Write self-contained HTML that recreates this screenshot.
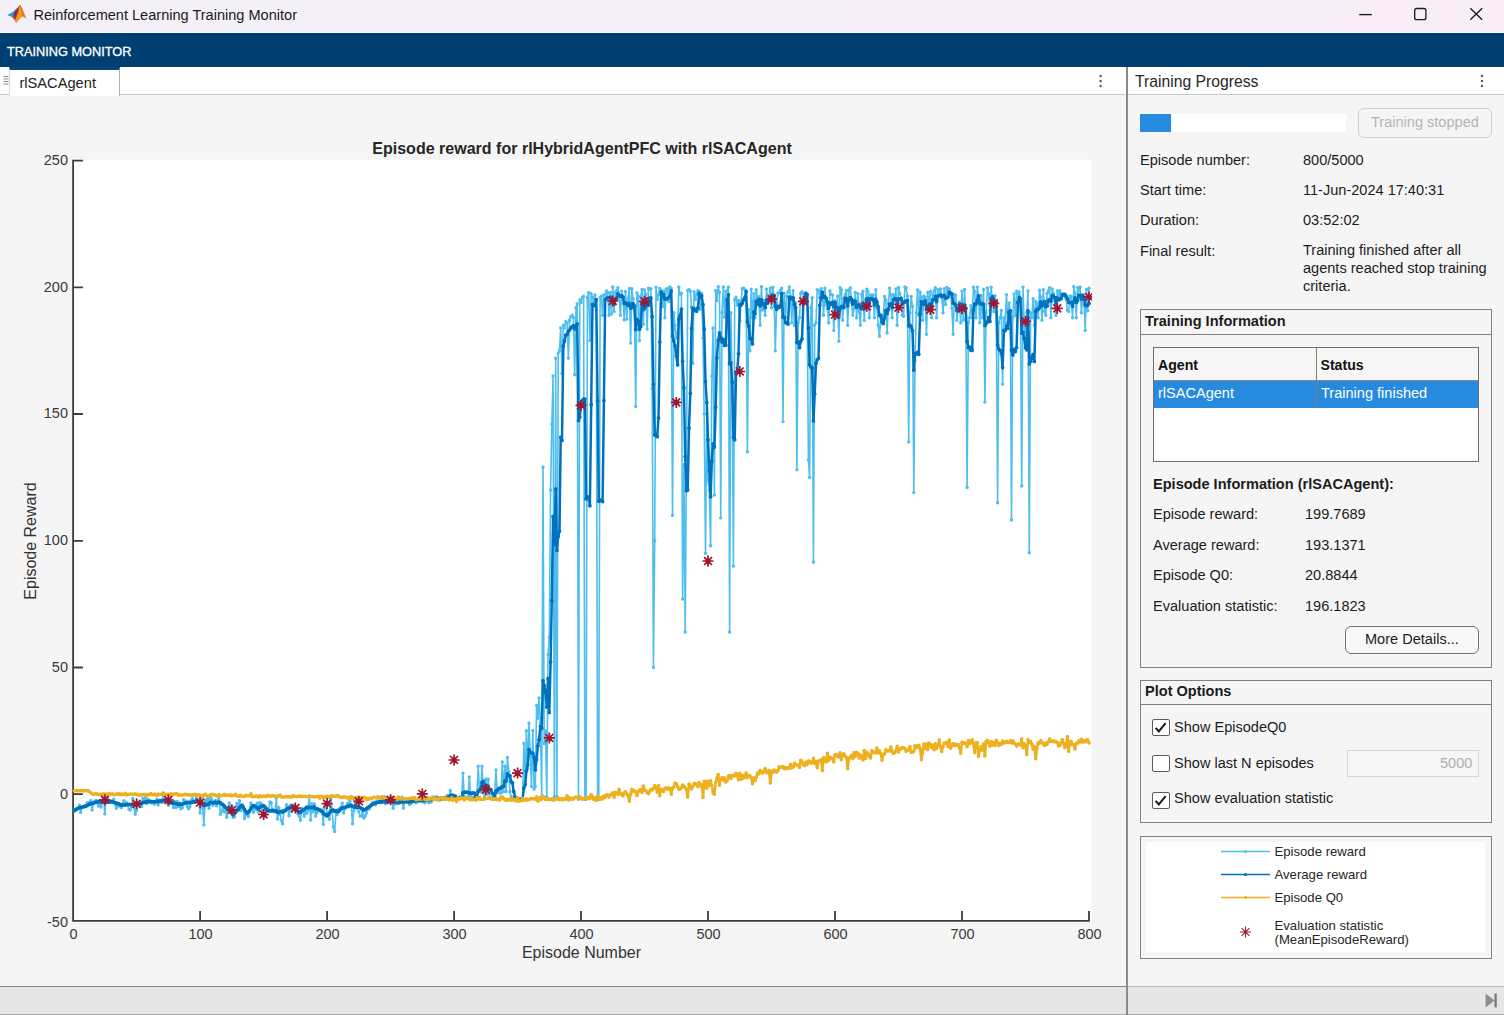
<!DOCTYPE html>
<html><head><meta charset="utf-8"><title>Reinforcement Learning Training Monitor</title>
<style>
html,body{margin:0;padding:0;}
body{width:1504px;height:1015px;position:relative;overflow:hidden;background:#f5f5f5;font-family:"Liberation Sans",sans-serif;color:#212121;}
.a{position:absolute;}
.t{position:absolute;white-space:nowrap;line-height:1;font-size:14.55px;color:#1c1c1c;}
.b{font-weight:bold;}
#titlebar{left:0;top:0;width:1504px;height:33.4px;background:linear-gradient(90deg,#f3f0f8 0%,#f5eff8 50%,#faeef7 100%);border-bottom:1.3px solid #fff;box-sizing:border-box;}
#strip{left:0;top:33.3px;width:1504px;height:33.6px;background:#003f72;}
#tabbar{left:0;top:67px;width:1504px;height:27px;background:#fff;border-bottom:1.9px solid #c9c9c9;}
#divider{left:1126px;top:67px;width:1.8px;height:948px;background:#8a8a8a;}
#status{left:0;top:986px;width:1504px;height:29px;background:#e6e6e6;border-top:1px solid #bcbcbc;border-bottom:1px solid #a8a8a8;box-sizing:border-box;}
#statusl{left:0;top:986px;width:1126px;height:1px;background:#858585;}
.panel{position:absolute;border:1.25px solid #808080;box-sizing:border-box;}
.panel .hd{position:absolute;left:0;right:0;top:0;border-bottom:1.25px solid #808080;box-sizing:border-box;}
.btn{position:absolute;box-sizing:border-box;border:1px solid #747474;border-radius:6px;background:#f8f8f8;}
.cb{position:absolute;width:17.4px;height:17px;box-sizing:border-box;border:1.2px solid #5c5c5c;border-radius:2px;background:#fff;}
</style></head><body>
<!-- window title bar -->
<div class="a" id="titlebar"></div>
<svg class="a" style="left:0;top:0" width="32" height="30" viewBox="0 0 32 30">
<path d="M7.3 15 C9.6 13.8 12 12.4 13.6 11.2 C15 9.8 16.2 8.6 17.2 7.6 L15.4 13.4 L13.2 17.7 C11.4 16.6 9.4 15.6 7.3 15 Z" fill="#3f8fd6"/>
<path d="M14.6 12.4 C16.4 10.2 18 7.4 19.4 5.2 L19.6 9 L17.4 15.4 L14.6 19.6 L13.2 17.7 Z" fill="#5a2a2a"/>
<path d="M19.4 5.2 C19.8 4.8 20.3 4.8 20.7 5.4 C22.6 8.6 24.6 14.4 26.6 18.8 C25 17.6 23.6 16.6 22.4 16.6 C20.4 17.4 18.2 20.6 16.2 22.8 C15.2 21.4 14.2 19.8 13.2 17.7 C15.6 15.6 17.8 10.4 19.4 5.2 Z" fill="#e8741e"/>
<path d="M19.4 5.2 C20.4 8 21.2 12.4 22.4 16.6 C20.4 17.4 18.2 20.6 16.2 22.8 C15.6 22 15.2 21.2 14.8 20.4 C17 17 18.6 11 19.4 5.2 Z" fill="#f29a1f"/>
<path d="M15.2 14.6 C16.4 12.8 17.8 9.6 19 6.2 L18.4 11.4 L15.8 18.6 L14.2 19.4 L13.3 17.7 Z" fill="#b5202c" opacity="0.85"/>
<path d="M20.2 7.4 L20.8 11.6 L20.2 11.8 Z" fill="#f7c21a"/>
</svg>
<div class="t" id="wtitle" style="left:33.4px;top:7.9px;font-size:14.55px;color:#1b1b1b;">Reinforcement Learning Training Monitor</div>
<svg class="a" style="left:1350px;top:0" width="154" height="33" viewBox="1350 0 154 33">
<path d="M1359.2 14.6 H1371.8" stroke="#1a1a1a" stroke-width="1.35" fill="none"/>
<rect x="1414.7" y="8.5" width="11.2" height="11.2" rx="2" stroke="#1a1a1a" stroke-width="1.3" fill="none"/>
<path d="M1470.3 8.2 L1482.2 19.8 M1482.2 8.2 L1470.3 19.8" stroke="#1a1a1a" stroke-width="1.35" fill="none"/>
</svg>
<!-- toolstrip -->
<div class="a" id="strip"></div>
<div class="t" id="tmon" style="left:7px;top:46px;font-size:12.75px;color:#fff;-webkit-text-stroke:0.3px #fff;">TRAINING MONITOR</div>
<!-- tab bar -->
<div class="a" id="tabbar"></div>
<svg class="a" style="left:2px;top:74px" width="8" height="14" viewBox="0 0 8 14"><path d="M1.5 2.5H6.5M1.5 5H6.5M1.5 7.5H6.5M1.5 10H6.5" stroke="#8c8c8c" stroke-width="1" fill="none"/></svg>
<div class="a" id="tab" style="left:9px;top:67px;width:110.8px;height:29px;background:#fff;border-top:3.6px solid #00457c;border-right:1px solid #b0b0b0;border-left:1px solid #d8d8d8;box-sizing:border-box;"></div>
<div class="t" id="tabtxt" style="left:19.4px;top:75.8px;font-size:14.67px;">rlSACAgent</div>
<svg class="a" style="left:1097px;top:73px" width="8" height="16" viewBox="0 0 8 16"><circle cx="3.6" cy="3" r="1.2" fill="#555"/><circle cx="3.6" cy="8" r="1.2" fill="#555"/><circle cx="3.6" cy="13" r="1.2" fill="#555"/></svg>
<svg class="a" style="left:1477px;top:73px" width="8" height="16" viewBox="0 0 8 16"><circle cx="5" cy="2.9" r="1.2" fill="#555"/><circle cx="5" cy="7.9" r="1.2" fill="#555"/><circle cx="5" cy="12.9" r="1.2" fill="#555"/></svg>
<div class="t" id="tprog" style="left:1135px;top:74.2px;font-size:15.72px;color:#262626;">Training Progress</div>
<div class="a" id="divider"></div>

<!-- PLOT -->
<svg class="a" style="left:0;top:96px" width="1126" height="890" viewBox="0 96 1126 890" font-family="Liberation Sans, sans-serif">
<rect x="73.6" y="159.8" width="1017.9" height="761.6" fill="#fff"/>
<path d="M73.1 159.8 V920.9 H1089.9 M73.1 920.9 h9.8 M73.1 794.2 h9.8 M73.1 667.5 h9.8 M73.1 540.8 h9.8 M73.1 414.0 h9.8 M73.1 287.3 h9.8 M73.1 160.6 h9.8 M73.1 920.9 v-10 M200.1 920.9 v-10 M327.1 920.9 v-10 M454.1 920.9 v-10 M581.0 920.9 v-10 M708.0 920.9 v-10 M835.0 920.9 v-10 M962.0 920.9 v-10 M1089.0 920.9 v-10" stroke="#3d3d3d" stroke-width="1.8" fill="none" stroke-linejoin="round"/>
<clipPath id="cp"><rect x="72.4" y="159" width="1019.6" height="763"/></clipPath>
<g clip-path="url(#cp)" fill="none" stroke-linejoin="round" stroke-linecap="round">
<polyline points="74.4,810.1 75.6,809.4 76.9,808.6 78.2,808.4 79.4,805.1 80.7,812.4 82.0,807.2 83.3,806.6 84.5,806.1 85.8,806.8 87.1,802.9 88.3,804.6 89.6,802.2 90.9,800.7 92.1,810.0 93.4,803.5 94.7,801.3 96.0,800.5 97.2,802.7 98.5,806.1 99.8,802.7 101.0,807.0 102.3,802.4 103.6,796.7 104.8,813.9 106.1,799.4 107.4,796.1 108.7,800.9 109.9,802.0 111.2,802.6 112.5,802.4 113.7,799.1 115.0,803.7 116.3,808.3 117.5,804.4 118.8,806.1 120.1,804.7 121.4,807.5 122.6,804.2 123.9,800.8 125.2,804.2 126.4,802.8 127.7,805.2 129.0,809.4 130.2,810.0 131.5,806.6 132.8,798.5 134.1,807.5 135.3,814.3 136.6,809.9 137.9,804.0 139.1,804.1 140.4,801.6 141.7,806.6 142.9,798.5 144.2,802.0 145.5,797.6 146.8,803.5 148.0,799.2 149.3,800.5 150.6,801.9 151.8,803.1 153.1,802.9 154.4,804.0 155.6,801.7 156.9,799.1 158.2,804.9 159.5,800.2 160.7,801.4 162.0,802.4 163.3,793.0 164.5,796.2 165.8,802.2 167.1,802.6 168.3,805.2 169.6,803.6 170.9,799.9 172.2,802.4 173.4,807.4 174.7,801.4 176.0,807.6 177.2,801.4 178.5,806.4 179.8,802.9 181.0,808.7 182.3,807.7 183.6,799.7 184.8,801.2 186.1,801.3 187.4,806.6 188.7,808.8 189.9,806.5 191.2,800.5 192.5,798.4 193.7,800.6 195.0,802.3 196.3,795.4 197.5,801.5 198.8,799.8 200.1,813.1 201.4,796.4 202.6,808.2 203.9,824.9 205.2,799.9 206.4,802.4 207.7,798.2 209.0,808.2 210.2,794.9 211.5,798.8 212.8,805.2 214.1,803.6 215.3,800.4 216.6,805.7 217.9,800.6 219.1,794.5 220.4,814.3 221.7,811.2 222.9,805.4 224.2,811.9 225.5,810.9 226.8,817.3 228.0,810.6 229.3,803.0 230.6,810.4 231.8,806.2 233.1,817.3 234.4,817.1 235.6,810.8 236.9,803.4 238.2,809.7 239.5,800.7 240.7,810.8 242.0,806.9 243.3,808.8 244.5,818.5 245.8,814.6 247.1,814.8 248.3,816.6 249.6,811.8 250.9,802.9 252.2,805.5 253.4,812.3 254.7,805.8 256.0,809.7 257.2,803.3 258.5,812.0 259.8,802.7 261.0,803.1 262.3,811.2 263.6,810.1 264.9,816.5 266.1,814.5 267.4,808.4 268.7,810.4 269.9,802.0 271.2,802.8 272.5,811.6 273.7,810.5 275.0,811.9 276.3,798.1 277.5,818.9 278.8,807.4 280.1,814.6 281.4,820.8 282.6,823.8 283.9,811.0 285.2,811.1 286.4,804.8 287.7,807.9 289.0,815.7 290.2,805.2 291.5,811.4 292.8,807.7 294.1,805.1 295.3,808.1 296.6,806.9 297.9,813.7 299.1,816.0 300.4,820.3 301.7,808.2 302.9,811.6 304.2,816.2 305.5,811.7 306.8,813.4 308.0,810.6 309.3,796.0 310.6,820.0 311.8,803.8 313.1,811.9 314.4,803.9 315.6,816.1 316.9,812.9 318.2,808.8 319.5,809.6 320.7,810.8 322.0,810.0 323.3,824.3 324.5,807.6 325.8,805.4 327.1,812.9 328.3,813.6 329.6,819.3 330.9,798.3 332.2,811.5 333.4,826.9 334.7,831.5 336.0,811.0 337.2,814.6 338.5,809.1 339.8,809.4 341.0,807.2 342.3,803.1 343.6,812.9 344.9,808.9 346.1,806.6 347.4,803.5 348.7,806.5 349.9,801.1 351.2,805.0 352.5,823.7 353.7,811.0 355.0,800.1 356.3,808.3 357.6,804.3 358.8,811.6 360.1,816.2 361.4,815.9 362.6,811.3 363.9,818.0 365.2,816.0 366.4,813.2 367.7,807.9 369.0,809.2 370.3,806.6 371.5,804.3 372.8,802.5 374.1,802.3 375.3,804.9 376.6,801.4 377.9,801.6 379.1,801.4 380.4,802.7 381.7,802.8 382.9,800.0 384.2,796.8 385.5,803.7 386.8,800.6 388.0,802.6 389.3,800.0 390.6,800.8 391.8,799.4 393.1,808.2 394.4,803.2 395.6,804.0 396.9,802.0 398.2,803.4 399.5,803.2 400.7,800.1 402.0,797.3 403.3,808.1 404.5,802.3 405.8,800.9 407.1,801.6 408.3,802.3 409.6,804.6 410.9,803.5 412.2,799.6 413.4,798.6 414.7,800.7 416.0,802.7 417.2,800.4 418.5,801.1 419.8,799.2 421.0,800.1 422.3,801.7 423.6,799.8 424.9,802.9 426.1,798.3 427.4,797.4 428.7,802.7 429.9,798.9 431.2,801.9 432.5,797.0 433.7,797.2 435.0,799.6 436.3,796.6 437.6,799.7 438.8,800.0 440.1,799.7 441.4,798.6 442.6,798.9 443.9,797.7 445.2,799.4 446.4,796.1 447.7,795.4 449.0,797.2 450.3,790.4 451.5,796.7 452.8,797.5 454.1,798.0 455.3,797.7 456.6,798.2 457.9,798.0 459.1,797.2 460.4,798.0 461.7,796.7 463.0,773.1 464.2,795.5 465.5,797.7 466.8,798.0 468.0,797.2 469.3,776.9 470.6,795.5 471.8,798.0 473.1,797.5 474.4,798.2 475.7,797.7 476.9,796.7 478.2,766.3 479.5,791.6 480.7,791.6 482.0,766.3 483.3,791.6 484.5,796.7 485.8,779.2 487.1,794.2 488.3,779.2 489.6,798.0 490.9,798.0 492.2,797.7 493.4,797.2 494.7,792.9 496.0,769.9 497.2,792.9 498.5,792.2 499.8,792.9 501.0,792.9 502.3,762.0 503.6,791.6 504.9,766.3 506.1,791.6 507.4,757.4 508.7,771.4 509.9,791.6 511.2,796.7 512.5,798.0 513.7,799.3 515.0,799.3 516.3,799.3 517.6,799.3 518.8,799.3 520.1,799.3 521.4,799.3 522.6,799.3 523.9,743.5 525.2,781.5 526.4,730.8 527.7,768.8 529.0,723.2 530.3,756.2 531.5,786.6 532.8,730.8 534.1,789.1 535.3,786.6 536.6,705.5 537.9,718.2 539.1,697.9 540.4,723.2 541.7,796.7 543.0,467.3 544.2,743.5 545.5,730.8 546.8,796.7 548.0,654.8 549.3,637.1 550.6,490.1 551.8,424.2 553.1,376.0 554.4,796.7 555.7,358.3 556.9,796.7 558.2,353.2 559.5,350.7 560.7,327.9 562.0,373.5 563.3,325.3 564.5,327.9 565.8,321.5 567.1,322.8 568.4,358.3 569.6,320.3 570.9,316.5 572.2,315.2 573.4,317.7 574.7,374.8 576.0,307.6 577.2,303.8 578.5,799.3 579.8,300.0 581.0,302.5 582.3,297.5 583.6,296.2 584.9,799.3 586.1,799.3 587.4,297.5 588.7,292.4 589.9,340.5 591.2,293.7 592.5,297.5 593.7,302.5 595.0,294.9 596.3,310.1 597.6,799.3 598.8,799.3 600.1,297.5 601.4,296.2 602.6,315.2 603.9,294.9 605.2,294.9 606.4,290.9 607.7,292.7 609.0,315.2 610.3,292.4 611.5,313.9 612.8,287.0 614.1,311.4 615.3,292.4 616.6,290.6 617.9,287.6 619.1,295.0 620.4,315.2 621.7,291.1 623.0,297.0 624.2,319.9 625.5,291.4 626.8,319.0 628.0,298.7 629.3,288.4 630.6,343.1 631.8,288.7 633.1,298.9 634.4,310.1 635.7,406.4 636.9,293.0 638.2,296.3 639.5,340.5 640.7,297.0 642.0,289.4 643.3,324.3 644.5,290.0 645.8,294.3 647.1,329.1 648.4,288.1 649.6,289.2 650.9,288.6 652.2,388.7 653.4,667.5 654.7,540.8 656.0,287.1 657.2,299.5 658.5,294.8 659.8,288.4 661.1,290.7 662.3,306.5 663.6,291.2 664.9,317.7 666.1,289.0 667.4,288.7 668.7,301.2 669.9,287.0 671.2,288.3 672.5,515.4 673.8,312.7 675.0,325.3 676.3,338.0 677.6,332.9 678.8,287.0 680.1,294.3 681.4,293.2 682.6,599.0 683.9,464.7 685.2,632.0 686.4,464.7 687.7,290.2 689.0,289.6 690.3,291.2 691.5,307.0 692.8,363.3 694.1,291.7 695.3,299.5 696.6,294.4 697.9,290.7 699.1,291.2 700.4,309.4 701.7,293.5 703.0,338.0 704.2,414.0 705.5,553.4 706.8,414.0 708.0,479.9 709.3,490.1 710.6,545.8 711.8,376.0 713.1,327.9 714.4,495.1 715.7,290.5 716.9,300.5 718.2,286.8 719.5,292.2 720.7,517.9 722.0,312.5 723.3,287.0 724.5,317.1 725.8,291.5 727.1,290.7 728.4,287.1 729.6,632.0 730.9,312.7 732.2,388.7 733.4,566.1 734.7,299.7 736.0,297.2 737.2,305.2 738.5,300.4 739.8,320.8 741.1,301.6 742.3,288.4 743.6,288.1 744.9,289.6 746.1,290.7 747.4,452.0 748.7,309.6 749.9,350.7 751.2,289.2 752.5,317.7 753.8,293.4 755.0,317.7 756.3,290.0 757.6,300.5 758.8,296.8 760.1,325.3 761.4,286.8 762.6,310.1 763.9,300.4 765.2,315.2 766.5,289.1 767.7,300.4 769.0,296.3 770.3,288.1 771.5,307.8 772.8,287.3 774.1,296.8 775.3,350.7 776.6,303.7 777.9,293.2 779.2,292.5 780.4,290.4 781.7,288.2 783.0,421.6 784.2,293.3 785.5,317.7 786.8,296.1 788.0,291.9 789.3,286.9 790.6,296.3 791.8,322.8 793.1,290.7 794.4,325.3 795.7,303.0 796.9,469.8 798.2,322.8 799.5,317.7 800.7,293.5 802.0,291.7 803.3,293.6 804.5,297.0 805.8,292.8 807.1,297.0 808.4,459.7 809.6,477.4 810.9,307.6 812.2,297.6 813.4,562.3 814.7,325.3 816.0,322.8 817.2,289.7 818.5,290.6 819.8,297.8 821.1,288.7 822.3,293.6 823.6,315.2 824.9,288.1 826.1,304.9 827.4,308.8 828.7,322.8 829.9,291.0 831.2,294.6 832.5,294.9 833.8,330.4 835.0,300.7 836.3,317.7 837.6,296.0 838.8,341.3 840.1,287.6 841.4,290.0 842.6,320.3 843.9,298.5 845.2,294.6 846.5,290.4 847.7,325.3 849.0,289.9 850.3,288.0 851.5,302.6 852.8,315.2 854.1,308.1 855.3,292.4 856.6,317.7 857.9,293.6 859.2,311.7 860.4,325.3 861.7,294.3 863.0,291.2 864.2,320.3 865.5,299.8 866.8,289.2 868.0,291.7 869.3,317.7 870.6,295.0 871.9,299.1 873.1,295.0 874.4,317.7 875.7,289.6 876.9,307.6 878.2,325.3 879.5,336.2 880.7,317.7 882.0,322.8 883.3,315.2 884.6,296.4 885.8,299.9 887.1,332.9 888.4,303.2 889.6,288.2 890.9,295.4 892.2,317.7 893.4,294.7 894.7,298.5 896.0,289.0 897.2,325.3 898.5,287.5 899.8,293.7 901.1,298.0 902.3,315.2 903.6,316.3 904.9,287.0 906.1,287.8 907.4,296.0 908.7,441.9 909.9,312.7 911.2,296.5 912.5,306.5 913.8,492.6 915.0,360.8 916.3,312.7 917.6,290.0 918.8,315.2 920.1,292.3 921.4,297.9 922.6,320.3 923.9,295.9 925.2,297.1 926.5,334.2 927.7,292.4 929.0,303.9 930.3,291.3 931.5,317.7 932.8,294.2 934.1,290.7 935.3,287.7 936.6,317.7 937.9,289.6 939.2,291.3 940.4,288.9 941.7,295.9 943.0,312.7 944.2,288.6 945.5,304.5 946.8,287.4 948.0,292.2 949.3,289.0 950.6,292.6 951.9,308.2 953.1,334.2 954.4,294.6 955.7,295.2 956.9,320.3 958.2,308.3 959.5,302.3 960.7,322.8 962.0,291.3 963.3,320.3 964.6,289.5 965.8,317.7 967.1,487.5 968.4,322.8 969.6,317.7 970.9,305.7 972.2,317.7 973.4,287.3 974.7,291.5 976.0,317.7 977.3,287.1 978.5,296.4 979.8,322.8 981.1,295.4 982.3,317.7 983.6,289.4 984.9,402.1 986.1,312.7 987.4,288.0 988.7,294.3 989.9,310.1 991.2,287.3 992.5,303.5 993.8,311.6 995.0,295.7 996.3,312.7 997.6,502.7 998.8,322.8 1000.1,317.7 1001.4,310.4 1002.6,384.1 1003.9,317.7 1005.2,322.8 1006.5,294.6 1007.7,322.8 1009.0,303.0 1010.3,311.6 1011.5,520.0 1012.8,317.7 1014.1,294.0 1015.3,315.2 1016.6,291.2 1017.9,293.8 1019.2,292.0 1020.4,302.0 1021.7,486.0 1023.0,287.1 1024.2,325.3 1025.5,338.0 1026.8,312.7 1028.0,291.0 1029.3,552.7 1030.6,312.7 1031.9,317.7 1033.1,298.6 1034.4,325.3 1035.7,301.5 1036.9,303.5 1038.2,317.7 1039.5,290.3 1040.7,297.0 1042.0,320.3 1043.3,289.7 1044.6,311.4 1045.8,315.2 1047.1,293.4 1048.4,290.9 1049.6,287.6 1050.9,317.7 1052.2,288.9 1053.4,293.4 1054.7,300.8 1056.0,315.2 1057.3,290.9 1058.5,299.1 1059.8,290.7 1061.1,296.3 1062.3,294.4 1063.6,294.0 1064.9,296.6 1066.1,299.0 1067.4,310.1 1068.7,311.6 1070.0,295.9 1071.2,296.4 1072.5,317.7 1073.8,286.8 1075.0,293.2 1076.3,317.7 1077.6,287.6 1078.8,290.8 1080.1,286.9 1081.4,312.7 1082.7,297.4 1083.9,298.3 1085.2,330.4 1086.5,289.5 1087.7,310.8 1089.0,288.2" stroke="#4DBEEE" stroke-width="1.6"/>
<path d="M74.4 810.1h0 M75.6 809.4h0 M76.9 808.6h0 M78.2 808.4h0 M79.4 805.1h0 M80.7 812.4h0 M82.0 807.2h0 M83.3 806.6h0 M84.5 806.1h0 M85.8 806.8h0 M87.1 802.9h0 M88.3 804.6h0 M89.6 802.2h0 M90.9 800.7h0 M92.1 810.0h0 M93.4 803.5h0 M94.7 801.3h0 M96.0 800.5h0 M97.2 802.7h0 M98.5 806.1h0 M99.8 802.7h0 M101.0 807.0h0 M102.3 802.4h0 M103.6 796.7h0 M104.8 813.9h0 M106.1 799.4h0 M107.4 796.1h0 M108.7 800.9h0 M109.9 802.0h0 M111.2 802.6h0 M112.5 802.4h0 M113.7 799.1h0 M115.0 803.7h0 M116.3 808.3h0 M117.5 804.4h0 M118.8 806.1h0 M120.1 804.7h0 M121.4 807.5h0 M122.6 804.2h0 M123.9 800.8h0 M125.2 804.2h0 M126.4 802.8h0 M127.7 805.2h0 M129.0 809.4h0 M130.2 810.0h0 M131.5 806.6h0 M132.8 798.5h0 M134.1 807.5h0 M135.3 814.3h0 M136.6 809.9h0 M137.9 804.0h0 M139.1 804.1h0 M140.4 801.6h0 M141.7 806.6h0 M142.9 798.5h0 M144.2 802.0h0 M145.5 797.6h0 M146.8 803.5h0 M148.0 799.2h0 M149.3 800.5h0 M150.6 801.9h0 M151.8 803.1h0 M153.1 802.9h0 M154.4 804.0h0 M155.6 801.7h0 M156.9 799.1h0 M158.2 804.9h0 M159.5 800.2h0 M160.7 801.4h0 M162.0 802.4h0 M163.3 793.0h0 M164.5 796.2h0 M165.8 802.2h0 M167.1 802.6h0 M168.3 805.2h0 M169.6 803.6h0 M170.9 799.9h0 M172.2 802.4h0 M173.4 807.4h0 M174.7 801.4h0 M176.0 807.6h0 M177.2 801.4h0 M178.5 806.4h0 M179.8 802.9h0 M181.0 808.7h0 M182.3 807.7h0 M183.6 799.7h0 M184.8 801.2h0 M186.1 801.3h0 M187.4 806.6h0 M188.7 808.8h0 M189.9 806.5h0 M191.2 800.5h0 M192.5 798.4h0 M193.7 800.6h0 M195.0 802.3h0 M196.3 795.4h0 M197.5 801.5h0 M198.8 799.8h0 M200.1 813.1h0 M201.4 796.4h0 M202.6 808.2h0 M203.9 824.9h0 M205.2 799.9h0 M206.4 802.4h0 M207.7 798.2h0 M209.0 808.2h0 M210.2 794.9h0 M211.5 798.8h0 M212.8 805.2h0 M214.1 803.6h0 M215.3 800.4h0 M216.6 805.7h0 M217.9 800.6h0 M219.1 794.5h0 M220.4 814.3h0 M221.7 811.2h0 M222.9 805.4h0 M224.2 811.9h0 M225.5 810.9h0 M226.8 817.3h0 M228.0 810.6h0 M229.3 803.0h0 M230.6 810.4h0 M231.8 806.2h0 M233.1 817.3h0 M234.4 817.1h0 M235.6 810.8h0 M236.9 803.4h0 M238.2 809.7h0 M239.5 800.7h0 M240.7 810.8h0 M242.0 806.9h0 M243.3 808.8h0 M244.5 818.5h0 M245.8 814.6h0 M247.1 814.8h0 M248.3 816.6h0 M249.6 811.8h0 M250.9 802.9h0 M252.2 805.5h0 M253.4 812.3h0 M254.7 805.8h0 M256.0 809.7h0 M257.2 803.3h0 M258.5 812.0h0 M259.8 802.7h0 M261.0 803.1h0 M262.3 811.2h0 M263.6 810.1h0 M264.9 816.5h0 M266.1 814.5h0 M267.4 808.4h0 M268.7 810.4h0 M269.9 802.0h0 M271.2 802.8h0 M272.5 811.6h0 M273.7 810.5h0 M275.0 811.9h0 M276.3 798.1h0 M277.5 818.9h0 M278.8 807.4h0 M280.1 814.6h0 M281.4 820.8h0 M282.6 823.8h0 M283.9 811.0h0 M285.2 811.1h0 M286.4 804.8h0 M287.7 807.9h0 M289.0 815.7h0 M290.2 805.2h0 M291.5 811.4h0 M292.8 807.7h0 M294.1 805.1h0 M295.3 808.1h0 M296.6 806.9h0 M297.9 813.7h0 M299.1 816.0h0 M300.4 820.3h0 M301.7 808.2h0 M302.9 811.6h0 M304.2 816.2h0 M305.5 811.7h0 M306.8 813.4h0 M308.0 810.6h0 M309.3 796.0h0 M310.6 820.0h0 M311.8 803.8h0 M313.1 811.9h0 M314.4 803.9h0 M315.6 816.1h0 M316.9 812.9h0 M318.2 808.8h0 M319.5 809.6h0 M320.7 810.8h0 M322.0 810.0h0 M323.3 824.3h0 M324.5 807.6h0 M325.8 805.4h0 M327.1 812.9h0 M328.3 813.6h0 M329.6 819.3h0 M330.9 798.3h0 M332.2 811.5h0 M333.4 826.9h0 M334.7 831.5h0 M336.0 811.0h0 M337.2 814.6h0 M338.5 809.1h0 M339.8 809.4h0 M341.0 807.2h0 M342.3 803.1h0 M343.6 812.9h0 M344.9 808.9h0 M346.1 806.6h0 M347.4 803.5h0 M348.7 806.5h0 M349.9 801.1h0 M351.2 805.0h0 M352.5 823.7h0 M353.7 811.0h0 M355.0 800.1h0 M356.3 808.3h0 M357.6 804.3h0 M358.8 811.6h0 M360.1 816.2h0 M361.4 815.9h0 M362.6 811.3h0 M363.9 818.0h0 M365.2 816.0h0 M366.4 813.2h0 M367.7 807.9h0 M369.0 809.2h0 M370.3 806.6h0 M371.5 804.3h0 M372.8 802.5h0 M374.1 802.3h0 M375.3 804.9h0 M376.6 801.4h0 M377.9 801.6h0 M379.1 801.4h0 M380.4 802.7h0 M381.7 802.8h0 M382.9 800.0h0 M384.2 796.8h0 M385.5 803.7h0 M386.8 800.6h0 M388.0 802.6h0 M389.3 800.0h0 M390.6 800.8h0 M391.8 799.4h0 M393.1 808.2h0 M394.4 803.2h0 M395.6 804.0h0 M396.9 802.0h0 M398.2 803.4h0 M399.5 803.2h0 M400.7 800.1h0 M402.0 797.3h0 M403.3 808.1h0 M404.5 802.3h0 M405.8 800.9h0 M407.1 801.6h0 M408.3 802.3h0 M409.6 804.6h0 M410.9 803.5h0 M412.2 799.6h0 M413.4 798.6h0 M414.7 800.7h0 M416.0 802.7h0 M417.2 800.4h0 M418.5 801.1h0 M419.8 799.2h0 M421.0 800.1h0 M422.3 801.7h0 M423.6 799.8h0 M424.9 802.9h0 M426.1 798.3h0 M427.4 797.4h0 M428.7 802.7h0 M429.9 798.9h0 M431.2 801.9h0 M432.5 797.0h0 M433.7 797.2h0 M435.0 799.6h0 M436.3 796.6h0 M437.6 799.7h0 M438.8 800.0h0 M440.1 799.7h0 M441.4 798.6h0 M442.6 798.9h0 M443.9 797.7h0 M445.2 799.4h0 M446.4 796.1h0 M447.7 795.4h0 M449.0 797.2h0 M450.3 790.4h0 M451.5 796.7h0 M452.8 797.5h0 M454.1 798.0h0 M455.3 797.7h0 M456.6 798.2h0 M457.9 798.0h0 M459.1 797.2h0 M460.4 798.0h0 M461.7 796.7h0 M463.0 773.1h0 M464.2 795.5h0 M465.5 797.7h0 M466.8 798.0h0 M468.0 797.2h0 M469.3 776.9h0 M470.6 795.5h0 M471.8 798.0h0 M473.1 797.5h0 M474.4 798.2h0 M475.7 797.7h0 M476.9 796.7h0 M478.2 766.3h0 M479.5 791.6h0 M480.7 791.6h0 M482.0 766.3h0 M483.3 791.6h0 M484.5 796.7h0 M485.8 779.2h0 M487.1 794.2h0 M488.3 779.2h0 M489.6 798.0h0 M490.9 798.0h0 M492.2 797.7h0 M493.4 797.2h0 M494.7 792.9h0 M496.0 769.9h0 M497.2 792.9h0 M498.5 792.2h0 M499.8 792.9h0 M501.0 792.9h0 M502.3 762.0h0 M503.6 791.6h0 M504.9 766.3h0 M506.1 791.6h0 M507.4 757.4h0 M508.7 771.4h0 M509.9 791.6h0 M511.2 796.7h0 M512.5 798.0h0 M513.7 799.3h0 M515.0 799.3h0 M516.3 799.3h0 M517.6 799.3h0 M518.8 799.3h0 M520.1 799.3h0 M521.4 799.3h0 M522.6 799.3h0 M523.9 743.5h0 M525.2 781.5h0 M526.4 730.8h0 M527.7 768.8h0 M529.0 723.2h0 M530.3 756.2h0 M531.5 786.6h0 M532.8 730.8h0 M534.1 789.1h0 M535.3 786.6h0 M536.6 705.5h0 M537.9 718.2h0 M539.1 697.9h0 M540.4 723.2h0 M541.7 796.7h0 M543.0 467.3h0 M544.2 743.5h0 M545.5 730.8h0 M546.8 796.7h0 M548.0 654.8h0 M549.3 637.1h0 M550.6 490.1h0 M551.8 424.2h0 M553.1 376.0h0 M554.4 796.7h0 M555.7 358.3h0 M556.9 796.7h0 M558.2 353.2h0 M559.5 350.7h0 M560.7 327.9h0 M562.0 373.5h0 M563.3 325.3h0 M564.5 327.9h0 M565.8 321.5h0 M567.1 322.8h0 M568.4 358.3h0 M569.6 320.3h0 M570.9 316.5h0 M572.2 315.2h0 M573.4 317.7h0 M574.7 374.8h0 M576.0 307.6h0 M577.2 303.8h0 M578.5 799.3h0 M579.8 300.0h0 M581.0 302.5h0 M582.3 297.5h0 M583.6 296.2h0 M584.9 799.3h0 M586.1 799.3h0 M587.4 297.5h0 M588.7 292.4h0 M589.9 340.5h0 M591.2 293.7h0 M592.5 297.5h0 M593.7 302.5h0 M595.0 294.9h0 M596.3 310.1h0 M597.6 799.3h0 M598.8 799.3h0 M600.1 297.5h0 M601.4 296.2h0 M602.6 315.2h0 M603.9 294.9h0 M605.2 294.9h0 M606.4 290.9h0 M607.7 292.7h0 M609.0 315.2h0 M610.3 292.4h0 M611.5 313.9h0 M612.8 287.0h0 M614.1 311.4h0 M615.3 292.4h0 M616.6 290.6h0 M617.9 287.6h0 M619.1 295.0h0 M620.4 315.2h0 M621.7 291.1h0 M623.0 297.0h0 M624.2 319.9h0 M625.5 291.4h0 M626.8 319.0h0 M628.0 298.7h0 M629.3 288.4h0 M630.6 343.1h0 M631.8 288.7h0 M633.1 298.9h0 M634.4 310.1h0 M635.7 406.4h0 M636.9 293.0h0 M638.2 296.3h0 M639.5 340.5h0 M640.7 297.0h0 M642.0 289.4h0 M643.3 324.3h0 M644.5 290.0h0 M645.8 294.3h0 M647.1 329.1h0 M648.4 288.1h0 M649.6 289.2h0 M650.9 288.6h0 M652.2 388.7h0 M653.4 667.5h0 M654.7 540.8h0 M656.0 287.1h0 M657.2 299.5h0 M658.5 294.8h0 M659.8 288.4h0 M661.1 290.7h0 M662.3 306.5h0 M663.6 291.2h0 M664.9 317.7h0 M666.1 289.0h0 M667.4 288.7h0 M668.7 301.2h0 M669.9 287.0h0 M671.2 288.3h0 M672.5 515.4h0 M673.8 312.7h0 M675.0 325.3h0 M676.3 338.0h0 M677.6 332.9h0 M678.8 287.0h0 M680.1 294.3h0 M681.4 293.2h0 M682.6 599.0h0 M683.9 464.7h0 M685.2 632.0h0 M686.4 464.7h0 M687.7 290.2h0 M689.0 289.6h0 M690.3 291.2h0 M691.5 307.0h0 M692.8 363.3h0 M694.1 291.7h0 M695.3 299.5h0 M696.6 294.4h0 M697.9 290.7h0 M699.1 291.2h0 M700.4 309.4h0 M701.7 293.5h0 M703.0 338.0h0 M704.2 414.0h0 M705.5 553.4h0 M706.8 414.0h0 M708.0 479.9h0 M709.3 490.1h0 M710.6 545.8h0 M711.8 376.0h0 M713.1 327.9h0 M714.4 495.1h0 M715.7 290.5h0 M716.9 300.5h0 M718.2 286.8h0 M719.5 292.2h0 M720.7 517.9h0 M722.0 312.5h0 M723.3 287.0h0 M724.5 317.1h0 M725.8 291.5h0 M727.1 290.7h0 M728.4 287.1h0 M729.6 632.0h0 M730.9 312.7h0 M732.2 388.7h0 M733.4 566.1h0 M734.7 299.7h0 M736.0 297.2h0 M737.2 305.2h0 M738.5 300.4h0 M739.8 320.8h0 M741.1 301.6h0 M742.3 288.4h0 M743.6 288.1h0 M744.9 289.6h0 M746.1 290.7h0 M747.4 452.0h0 M748.7 309.6h0 M749.9 350.7h0 M751.2 289.2h0 M752.5 317.7h0 M753.8 293.4h0 M755.0 317.7h0 M756.3 290.0h0 M757.6 300.5h0 M758.8 296.8h0 M760.1 325.3h0 M761.4 286.8h0 M762.6 310.1h0 M763.9 300.4h0 M765.2 315.2h0 M766.5 289.1h0 M767.7 300.4h0 M769.0 296.3h0 M770.3 288.1h0 M771.5 307.8h0 M772.8 287.3h0 M774.1 296.8h0 M775.3 350.7h0 M776.6 303.7h0 M777.9 293.2h0 M779.2 292.5h0 M780.4 290.4h0 M781.7 288.2h0 M783.0 421.6h0 M784.2 293.3h0 M785.5 317.7h0 M786.8 296.1h0 M788.0 291.9h0 M789.3 286.9h0 M790.6 296.3h0 M791.8 322.8h0 M793.1 290.7h0 M794.4 325.3h0 M795.7 303.0h0 M796.9 469.8h0 M798.2 322.8h0 M799.5 317.7h0 M800.7 293.5h0 M802.0 291.7h0 M803.3 293.6h0 M804.5 297.0h0 M805.8 292.8h0 M807.1 297.0h0 M808.4 459.7h0 M809.6 477.4h0 M810.9 307.6h0 M812.2 297.6h0 M813.4 562.3h0 M814.7 325.3h0 M816.0 322.8h0 M817.2 289.7h0 M818.5 290.6h0 M819.8 297.8h0 M821.1 288.7h0 M822.3 293.6h0 M823.6 315.2h0 M824.9 288.1h0 M826.1 304.9h0 M827.4 308.8h0 M828.7 322.8h0 M829.9 291.0h0 M831.2 294.6h0 M832.5 294.9h0 M833.8 330.4h0 M835.0 300.7h0 M836.3 317.7h0 M837.6 296.0h0 M838.8 341.3h0 M840.1 287.6h0 M841.4 290.0h0 M842.6 320.3h0 M843.9 298.5h0 M845.2 294.6h0 M846.5 290.4h0 M847.7 325.3h0 M849.0 289.9h0 M850.3 288.0h0 M851.5 302.6h0 M852.8 315.2h0 M854.1 308.1h0 M855.3 292.4h0 M856.6 317.7h0 M857.9 293.6h0 M859.2 311.7h0 M860.4 325.3h0 M861.7 294.3h0 M863.0 291.2h0 M864.2 320.3h0 M865.5 299.8h0 M866.8 289.2h0 M868.0 291.7h0 M869.3 317.7h0 M870.6 295.0h0 M871.9 299.1h0 M873.1 295.0h0 M874.4 317.7h0 M875.7 289.6h0 M876.9 307.6h0 M878.2 325.3h0 M879.5 336.2h0 M880.7 317.7h0 M882.0 322.8h0 M883.3 315.2h0 M884.6 296.4h0 M885.8 299.9h0 M887.1 332.9h0 M888.4 303.2h0 M889.6 288.2h0 M890.9 295.4h0 M892.2 317.7h0 M893.4 294.7h0 M894.7 298.5h0 M896.0 289.0h0 M897.2 325.3h0 M898.5 287.5h0 M899.8 293.7h0 M901.1 298.0h0 M902.3 315.2h0 M903.6 316.3h0 M904.9 287.0h0 M906.1 287.8h0 M907.4 296.0h0 M908.7 441.9h0 M909.9 312.7h0 M911.2 296.5h0 M912.5 306.5h0 M913.8 492.6h0 M915.0 360.8h0 M916.3 312.7h0 M917.6 290.0h0 M918.8 315.2h0 M920.1 292.3h0 M921.4 297.9h0 M922.6 320.3h0 M923.9 295.9h0 M925.2 297.1h0 M926.5 334.2h0 M927.7 292.4h0 M929.0 303.9h0 M930.3 291.3h0 M931.5 317.7h0 M932.8 294.2h0 M934.1 290.7h0 M935.3 287.7h0 M936.6 317.7h0 M937.9 289.6h0 M939.2 291.3h0 M940.4 288.9h0 M941.7 295.9h0 M943.0 312.7h0 M944.2 288.6h0 M945.5 304.5h0 M946.8 287.4h0 M948.0 292.2h0 M949.3 289.0h0 M950.6 292.6h0 M951.9 308.2h0 M953.1 334.2h0 M954.4 294.6h0 M955.7 295.2h0 M956.9 320.3h0 M958.2 308.3h0 M959.5 302.3h0 M960.7 322.8h0 M962.0 291.3h0 M963.3 320.3h0 M964.6 289.5h0 M965.8 317.7h0 M967.1 487.5h0 M968.4 322.8h0 M969.6 317.7h0 M970.9 305.7h0 M972.2 317.7h0 M973.4 287.3h0 M974.7 291.5h0 M976.0 317.7h0 M977.3 287.1h0 M978.5 296.4h0 M979.8 322.8h0 M981.1 295.4h0 M982.3 317.7h0 M983.6 289.4h0 M984.9 402.1h0 M986.1 312.7h0 M987.4 288.0h0 M988.7 294.3h0 M989.9 310.1h0 M991.2 287.3h0 M992.5 303.5h0 M993.8 311.6h0 M995.0 295.7h0 M996.3 312.7h0 M997.6 502.7h0 M998.8 322.8h0 M1000.1 317.7h0 M1001.4 310.4h0 M1002.6 384.1h0 M1003.9 317.7h0 M1005.2 322.8h0 M1006.5 294.6h0 M1007.7 322.8h0 M1009.0 303.0h0 M1010.3 311.6h0 M1011.5 520.0h0 M1012.8 317.7h0 M1014.1 294.0h0 M1015.3 315.2h0 M1016.6 291.2h0 M1017.9 293.8h0 M1019.2 292.0h0 M1020.4 302.0h0 M1021.7 486.0h0 M1023.0 287.1h0 M1024.2 325.3h0 M1025.5 338.0h0 M1026.8 312.7h0 M1028.0 291.0h0 M1029.3 552.7h0 M1030.6 312.7h0 M1031.9 317.7h0 M1033.1 298.6h0 M1034.4 325.3h0 M1035.7 301.5h0 M1036.9 303.5h0 M1038.2 317.7h0 M1039.5 290.3h0 M1040.7 297.0h0 M1042.0 320.3h0 M1043.3 289.7h0 M1044.6 311.4h0 M1045.8 315.2h0 M1047.1 293.4h0 M1048.4 290.9h0 M1049.6 287.6h0 M1050.9 317.7h0 M1052.2 288.9h0 M1053.4 293.4h0 M1054.7 300.8h0 M1056.0 315.2h0 M1057.3 290.9h0 M1058.5 299.1h0 M1059.8 290.7h0 M1061.1 296.3h0 M1062.3 294.4h0 M1063.6 294.0h0 M1064.9 296.6h0 M1066.1 299.0h0 M1067.4 310.1h0 M1068.7 311.6h0 M1070.0 295.9h0 M1071.2 296.4h0 M1072.5 317.7h0 M1073.8 286.8h0 M1075.0 293.2h0 M1076.3 317.7h0 M1077.6 287.6h0 M1078.8 290.8h0 M1080.1 286.9h0 M1081.4 312.7h0 M1082.7 297.4h0 M1083.9 298.3h0 M1085.2 330.4h0 M1086.5 289.5h0 M1087.7 310.8h0 M1089.0 288.2h0" stroke="#4DBEEE" stroke-width="3.4"/>
<polyline points="74.4,810.7 75.6,809.8 76.9,809.0 78.2,808.2 79.4,807.7 80.7,807.6 82.0,807.2 83.3,806.8 84.5,806.4 85.8,806.2 87.1,805.3 88.3,804.8 89.6,804.2 90.9,803.6 92.1,803.4 93.4,803.1 94.7,802.6 96.0,802.2 97.2,802.0 98.5,801.4 99.8,801.1 101.0,801.6 102.3,801.9 103.6,801.7 104.8,802.3 106.1,802.2 107.4,801.6 108.7,801.6 109.9,802.0 111.2,801.4 112.5,801.8 113.7,802.2 115.0,802.6 116.3,803.2 117.5,803.5 118.8,804.0 120.1,804.5 121.4,805.0 122.6,804.9 123.9,804.9 125.2,805.0 126.4,804.6 127.7,804.3 129.0,804.4 130.2,804.7 131.5,804.7 132.8,804.3 134.1,804.3 135.3,804.5 136.6,804.3 137.9,804.0 139.1,804.2 140.4,803.8 141.7,803.3 142.9,802.6 144.2,802.4 145.5,802.0 146.8,802.0 148.0,801.5 149.3,801.6 150.6,801.5 151.8,801.8 153.1,801.6 154.4,801.8 155.6,801.8 156.9,801.5 158.2,801.5 159.5,801.2 160.7,800.9 162.0,800.9 163.3,800.4 164.5,800.2 165.8,800.5 167.1,800.9 168.3,801.2 169.6,802.1 170.9,802.5 172.2,802.7 173.4,803.2 174.7,803.1 176.0,803.6 177.2,803.8 178.5,804.3 179.8,804.2 181.0,804.3 182.3,804.1 183.6,803.7 184.8,803.2 186.1,802.9 187.4,802.6 188.7,802.5 189.9,802.7 191.2,802.5 192.5,802.2 193.7,801.6 195.0,801.6 196.3,801.2 197.5,801.5 198.8,801.8 200.1,802.8 201.4,802.6 202.6,803.6 203.9,805.2 205.2,805.4 206.4,804.6 207.7,804.5 209.0,804.4 210.2,802.5 211.5,802.4 212.8,802.5 214.1,802.7 215.3,802.2 216.6,802.8 217.9,802.8 219.1,802.1 220.4,802.7 221.7,804.0 222.9,804.6 224.2,805.9 225.5,807.4 226.8,808.1 228.0,808.6 229.3,810.2 230.6,811.9 231.8,813.2 233.1,814.8 234.4,813.4 235.6,812.3 236.9,810.5 238.2,809.6 239.5,807.7 240.7,806.3 242.0,805.2 243.3,807.2 244.5,809.3 245.8,811.6 247.1,813.1 248.3,812.0 249.6,810.7 250.9,808.5 252.2,806.8 253.4,805.7 254.7,806.1 256.0,807.0 257.2,807.8 258.5,808.9 259.8,807.5 261.0,806.5 262.3,805.8 263.6,805.6 264.9,807.0 266.1,808.8 267.4,810.0 268.7,810.8 269.9,811.0 271.2,810.3 272.5,810.3 273.7,810.6 275.0,811.0 276.3,811.0 277.5,812.3 278.8,812.3 280.1,811.6 281.4,811.3 282.6,812.0 283.9,810.9 285.2,810.5 286.4,809.3 287.7,808.4 289.0,807.8 290.2,807.3 291.5,807.2 292.8,807.1 294.1,808.2 295.3,808.9 296.6,810.0 297.9,811.1 299.1,812.4 300.4,812.0 301.7,810.8 302.9,810.1 304.2,809.3 305.5,808.3 306.8,807.1 308.0,807.7 309.3,807.1 310.6,807.6 311.8,807.3 313.1,807.3 314.4,807.0 315.6,808.8 316.9,808.8 318.2,809.6 319.5,809.9 320.7,810.8 322.0,811.5 323.3,813.3 324.5,814.2 325.8,814.9 327.1,815.9 328.3,814.6 329.6,812.8 330.9,811.0 332.2,810.2 333.4,810.1 334.7,811.3 336.0,810.8 337.2,811.7 338.5,811.5 339.8,810.3 341.0,808.6 342.3,808.0 343.6,807.6 344.9,807.3 346.1,806.9 347.4,806.5 348.7,806.4 349.9,805.5 351.2,805.3 352.5,806.4 353.7,806.9 355.0,806.5 356.3,807.0 357.6,807.3 358.8,806.8 360.1,807.4 361.4,808.6 362.6,809.0 363.9,810.1 365.2,809.6 366.4,808.7 367.7,807.6 369.0,807.0 370.3,805.8 371.5,804.9 372.8,804.1 374.1,803.6 375.3,803.2 376.6,802.6 377.9,802.3 379.1,802.0 380.4,801.8 381.7,801.7 382.9,801.7 384.2,801.5 385.5,801.6 386.8,801.5 388.0,801.5 389.3,801.5 390.6,801.7 391.8,801.5 393.1,801.9 394.4,801.9 395.6,802.2 396.9,802.2 398.2,802.5 399.5,802.1 400.7,801.9 402.0,801.5 403.3,801.9 404.5,801.8 405.8,801.6 407.1,801.7 408.3,802.0 409.6,801.8 410.9,801.7 412.2,801.5 413.4,801.2 414.7,801.0 416.0,800.8 417.2,800.5 418.5,800.5 419.8,800.5 421.0,800.4 422.3,800.3 423.6,800.3 424.9,800.3 426.1,800.2 427.4,800.0 428.7,800.0 429.9,799.8 431.2,799.6 432.5,799.4 433.7,799.2 435.0,798.9 436.3,798.6 437.6,798.4 438.8,798.4 440.1,798.5 441.4,798.4 442.6,798.5 443.9,798.3 445.2,798.2 446.4,798.1 447.7,797.5 449.0,797.2 450.3,795.7 451.5,795.2 452.8,795.4 454.1,796.0 455.3,796.1 456.6,797.6 457.9,797.9 459.1,797.8 460.4,797.8 461.7,797.6 463.0,792.6 464.2,792.1 465.5,792.2 466.8,792.2 468.0,792.3 469.3,793.1 470.6,793.1 471.8,793.1 473.1,793.0 474.4,793.2 475.7,797.4 476.9,797.6 478.2,791.3 479.5,790.1 480.7,788.8 482.0,782.5 483.3,781.5 484.5,787.6 485.8,785.1 487.1,785.6 488.3,788.2 489.6,789.5 490.9,789.7 492.2,793.4 493.4,794.0 494.7,796.8 496.0,791.1 497.2,790.1 498.5,789.0 499.8,788.2 501.0,788.2 502.3,786.6 503.6,786.3 504.9,781.2 506.1,780.9 507.4,773.8 508.7,775.7 509.9,775.7 511.2,781.8 512.5,783.0 513.7,791.4 515.0,797.0 516.3,798.5 517.6,799.0 518.8,799.3 520.1,799.3 521.4,799.3 522.6,799.3 523.9,788.1 525.2,784.6 526.4,770.9 527.7,764.8 529.0,749.6 530.3,752.1 531.5,753.1 532.8,753.1 534.1,757.2 535.3,769.9 536.6,759.7 537.9,746.0 539.1,739.4 540.4,726.3 541.7,728.3 543.0,680.6 544.2,685.7 545.5,692.3 546.8,707.0 548.0,678.6 549.3,712.6 550.6,661.9 551.8,600.6 553.1,516.4 554.4,544.8 555.7,489.0 556.9,550.4 558.2,536.2 559.5,531.1 560.7,437.3 562.0,440.4 563.3,346.1 564.5,341.0 565.8,335.2 567.1,334.2 568.4,331.2 569.6,330.1 570.9,327.9 572.2,326.6 573.4,325.6 574.7,328.9 576.0,326.3 577.2,323.8 578.5,420.6 579.8,417.1 581.0,402.6 582.3,400.6 583.6,399.1 584.9,399.1 586.1,498.9 587.4,497.9 588.7,496.9 589.9,505.8 591.2,404.7 592.5,304.3 593.7,305.3 595.0,305.8 596.3,299.7 597.6,400.9 598.8,501.2 600.1,500.2 601.4,500.5 602.6,501.5 603.9,400.6 605.2,299.7 606.4,298.4 607.7,297.7 609.0,297.7 610.3,297.2 611.5,301.0 612.8,300.2 614.1,304.0 615.3,299.4 616.6,299.1 617.9,293.8 619.1,295.4 620.4,296.2 621.7,295.9 623.0,297.2 624.2,303.6 625.5,302.9 626.8,303.7 628.0,305.2 629.3,303.5 630.6,308.1 631.8,307.6 633.1,303.6 634.4,305.9 635.7,329.5 636.9,319.5 638.2,321.0 639.5,329.3 640.7,326.7 642.0,303.3 643.3,309.5 644.5,308.3 645.8,299.0 647.1,305.4 648.4,305.2 649.6,298.1 650.9,297.9 652.2,316.7 653.4,384.4 654.7,434.9 656.0,434.5 657.2,436.7 658.5,417.9 659.8,342.1 661.1,292.1 662.3,296.0 663.6,294.3 664.9,298.9 666.1,299.0 667.4,298.6 668.7,297.6 669.9,296.7 671.2,290.9 672.5,336.1 673.8,340.9 675.0,345.7 676.3,355.9 677.6,364.9 678.8,319.2 680.1,315.5 681.4,309.1 682.6,361.3 683.9,387.7 685.2,456.6 686.4,490.7 687.7,490.1 689.0,428.2 690.3,393.5 691.5,328.5 692.8,308.3 694.1,308.6 695.3,310.6 696.6,311.2 697.9,308.0 699.1,293.5 700.4,297.1 701.7,295.9 703.0,304.6 704.2,329.2 705.5,381.7 706.8,402.6 708.0,439.9 709.3,470.3 710.6,496.7 711.8,461.2 713.1,443.9 714.4,447.0 715.7,407.1 716.9,358.0 718.2,340.2 719.5,333.0 720.7,337.6 722.0,342.0 723.3,339.3 724.5,345.4 725.8,345.2 727.1,299.8 728.4,294.7 729.6,363.7 730.9,362.8 732.2,382.2 733.4,437.3 734.7,439.8 736.0,372.9 737.2,371.4 738.5,353.7 739.8,304.7 741.1,305.1 742.3,303.3 743.6,299.9 744.9,297.7 746.1,291.7 747.4,321.8 748.7,326.0 749.9,338.5 751.2,338.5 752.5,343.9 753.8,312.1 755.0,313.7 756.3,301.6 757.6,303.9 758.8,299.7 760.1,306.1 761.4,299.9 762.6,303.9 763.9,303.9 765.2,307.6 766.5,300.3 767.7,303.1 769.0,300.3 770.3,297.8 771.5,296.3 772.8,296.0 774.1,295.3 775.3,306.1 776.6,309.3 777.9,306.3 779.2,307.4 780.4,306.1 781.7,293.6 783.0,317.2 784.2,317.2 785.5,322.3 786.8,323.4 788.0,324.1 789.3,297.2 790.6,297.8 791.8,298.8 793.1,297.7 794.4,304.4 795.7,307.6 796.9,342.3 798.2,342.3 799.5,347.7 800.7,341.4 802.0,339.1 803.3,303.9 804.5,298.7 805.8,293.7 807.1,294.4 808.4,328.0 809.6,364.8 810.9,366.9 812.2,367.9 813.4,420.9 814.7,394.0 816.0,363.1 817.2,359.6 818.5,358.2 819.8,305.3 821.1,297.9 822.3,292.1 823.6,297.2 824.9,296.7 826.1,298.1 827.4,302.1 828.7,308.0 829.9,303.1 831.2,304.4 832.5,302.4 833.8,306.7 835.0,302.3 836.3,307.7 837.6,307.9 838.8,317.2 840.1,308.6 841.4,306.5 842.6,307.0 843.9,307.5 845.2,298.2 846.5,298.7 847.7,305.8 849.0,299.7 850.3,297.6 851.5,299.2 852.8,304.2 854.1,300.8 855.3,301.3 856.6,307.2 857.9,305.4 859.2,304.7 860.4,308.1 861.7,308.5 863.0,303.2 864.2,308.6 865.5,306.2 866.8,298.9 868.0,298.4 869.3,303.7 870.6,298.7 871.9,298.6 873.1,299.7 874.4,304.9 875.7,299.3 876.9,301.8 878.2,307.0 879.5,315.3 880.7,315.3 882.0,321.9 883.3,323.5 884.6,317.7 885.8,310.4 887.1,313.4 888.4,309.5 889.6,304.1 890.9,303.9 892.2,307.5 893.4,299.8 894.7,298.9 896.0,299.1 897.2,305.1 898.5,299.0 899.8,298.8 901.1,298.7 902.3,303.9 903.6,302.1 904.9,302.0 906.1,300.9 907.4,300.5 908.7,325.8 909.9,325.1 911.2,327.0 912.5,330.7 913.8,370.0 915.0,353.8 916.3,353.8 917.6,352.5 918.8,354.3 920.1,314.2 921.4,301.6 922.6,303.1 923.9,304.3 925.2,300.7 926.5,309.1 927.7,308.0 929.0,304.7 930.3,303.8 931.5,307.9 932.8,299.9 934.1,299.6 935.3,296.3 936.6,301.6 937.9,296.0 939.2,295.4 940.4,295.0 941.7,296.7 943.0,295.7 944.2,295.5 945.5,298.1 946.8,297.8 948.0,297.1 949.3,292.3 950.6,293.1 951.9,293.9 953.1,303.2 954.4,303.7 955.7,304.9 956.9,310.5 958.2,310.5 959.5,304.1 960.7,309.8 962.0,309.0 963.3,309.0 964.6,305.2 965.8,308.3 967.1,341.3 968.4,347.6 969.6,347.1 970.9,350.3 972.2,350.3 973.4,310.2 974.7,304.0 976.0,304.0 977.3,300.3 978.5,296.0 979.8,303.1 981.1,303.9 982.3,303.9 983.6,304.3 984.9,325.5 986.1,323.5 987.4,322.0 988.7,317.3 989.9,321.4 991.2,298.5 992.5,296.7 993.8,301.4 995.0,301.6 996.3,302.2 997.6,345.2 998.8,349.1 1000.1,350.3 1001.4,353.3 1002.6,367.5 1003.9,330.5 1005.2,330.5 1006.5,325.9 1007.7,328.4 1009.0,312.2 1010.3,310.9 1011.5,350.4 1012.8,355.0 1014.1,349.3 1015.3,351.7 1016.6,347.6 1017.9,302.4 1019.2,297.2 1020.4,298.8 1021.7,333.0 1023.0,332.2 1024.2,338.5 1025.5,347.7 1026.8,349.8 1028.0,310.8 1029.3,363.9 1030.6,361.4 1031.9,357.3 1033.1,354.5 1034.4,361.4 1035.7,311.2 1036.9,309.3 1038.2,309.3 1039.5,307.7 1040.7,302.0 1042.0,305.7 1043.3,303.0 1044.6,301.7 1045.8,306.7 1047.1,306.0 1048.4,300.1 1049.6,299.7 1050.9,301.0 1052.2,295.7 1053.4,295.7 1054.7,297.7 1056.0,303.2 1057.3,297.9 1058.5,299.9 1059.8,299.4 1061.1,298.5 1062.3,294.3 1063.6,294.9 1064.9,294.4 1066.1,296.1 1067.4,298.8 1068.7,302.3 1070.0,302.7 1071.2,302.6 1072.5,306.4 1073.8,301.7 1075.0,298.0 1076.3,302.4 1077.6,300.6 1078.8,295.2 1080.1,295.2 1081.4,299.1 1082.7,295.1 1083.9,297.2 1085.2,305.1 1086.5,305.7 1087.7,305.3 1089.0,303.4" stroke="#0072BD" stroke-width="2.5"/>
<path d="M74.4 810.7h0 M75.6 809.8h0 M76.9 809.0h0 M78.2 808.2h0 M79.4 807.7h0 M80.7 807.6h0 M82.0 807.2h0 M83.3 806.8h0 M84.5 806.4h0 M85.8 806.2h0 M87.1 805.3h0 M88.3 804.8h0 M89.6 804.2h0 M90.9 803.6h0 M92.1 803.4h0 M93.4 803.1h0 M94.7 802.6h0 M96.0 802.2h0 M97.2 802.0h0 M98.5 801.4h0 M99.8 801.1h0 M101.0 801.6h0 M102.3 801.9h0 M103.6 801.7h0 M104.8 802.3h0 M106.1 802.2h0 M107.4 801.6h0 M108.7 801.6h0 M109.9 802.0h0 M111.2 801.4h0 M112.5 801.8h0 M113.7 802.2h0 M115.0 802.6h0 M116.3 803.2h0 M117.5 803.5h0 M118.8 804.0h0 M120.1 804.5h0 M121.4 805.0h0 M122.6 804.9h0 M123.9 804.9h0 M125.2 805.0h0 M126.4 804.6h0 M127.7 804.3h0 M129.0 804.4h0 M130.2 804.7h0 M131.5 804.7h0 M132.8 804.3h0 M134.1 804.3h0 M135.3 804.5h0 M136.6 804.3h0 M137.9 804.0h0 M139.1 804.2h0 M140.4 803.8h0 M141.7 803.3h0 M142.9 802.6h0 M144.2 802.4h0 M145.5 802.0h0 M146.8 802.0h0 M148.0 801.5h0 M149.3 801.6h0 M150.6 801.5h0 M151.8 801.8h0 M153.1 801.6h0 M154.4 801.8h0 M155.6 801.8h0 M156.9 801.5h0 M158.2 801.5h0 M159.5 801.2h0 M160.7 800.9h0 M162.0 800.9h0 M163.3 800.4h0 M164.5 800.2h0 M165.8 800.5h0 M167.1 800.9h0 M168.3 801.2h0 M169.6 802.1h0 M170.9 802.5h0 M172.2 802.7h0 M173.4 803.2h0 M174.7 803.1h0 M176.0 803.6h0 M177.2 803.8h0 M178.5 804.3h0 M179.8 804.2h0 M181.0 804.3h0 M182.3 804.1h0 M183.6 803.7h0 M184.8 803.2h0 M186.1 802.9h0 M187.4 802.6h0 M188.7 802.5h0 M189.9 802.7h0 M191.2 802.5h0 M192.5 802.2h0 M193.7 801.6h0 M195.0 801.6h0 M196.3 801.2h0 M197.5 801.5h0 M198.8 801.8h0 M200.1 802.8h0 M201.4 802.6h0 M202.6 803.6h0 M203.9 805.2h0 M205.2 805.4h0 M206.4 804.6h0 M207.7 804.5h0 M209.0 804.4h0 M210.2 802.5h0 M211.5 802.4h0 M212.8 802.5h0 M214.1 802.7h0 M215.3 802.2h0 M216.6 802.8h0 M217.9 802.8h0 M219.1 802.1h0 M220.4 802.7h0 M221.7 804.0h0 M222.9 804.6h0 M224.2 805.9h0 M225.5 807.4h0 M226.8 808.1h0 M228.0 808.6h0 M229.3 810.2h0 M230.6 811.9h0 M231.8 813.2h0 M233.1 814.8h0 M234.4 813.4h0 M235.6 812.3h0 M236.9 810.5h0 M238.2 809.6h0 M239.5 807.7h0 M240.7 806.3h0 M242.0 805.2h0 M243.3 807.2h0 M244.5 809.3h0 M245.8 811.6h0 M247.1 813.1h0 M248.3 812.0h0 M249.6 810.7h0 M250.9 808.5h0 M252.2 806.8h0 M253.4 805.7h0 M254.7 806.1h0 M256.0 807.0h0 M257.2 807.8h0 M258.5 808.9h0 M259.8 807.5h0 M261.0 806.5h0 M262.3 805.8h0 M263.6 805.6h0 M264.9 807.0h0 M266.1 808.8h0 M267.4 810.0h0 M268.7 810.8h0 M269.9 811.0h0 M271.2 810.3h0 M272.5 810.3h0 M273.7 810.6h0 M275.0 811.0h0 M276.3 811.0h0 M277.5 812.3h0 M278.8 812.3h0 M280.1 811.6h0 M281.4 811.3h0 M282.6 812.0h0 M283.9 810.9h0 M285.2 810.5h0 M286.4 809.3h0 M287.7 808.4h0 M289.0 807.8h0 M290.2 807.3h0 M291.5 807.2h0 M292.8 807.1h0 M294.1 808.2h0 M295.3 808.9h0 M296.6 810.0h0 M297.9 811.1h0 M299.1 812.4h0 M300.4 812.0h0 M301.7 810.8h0 M302.9 810.1h0 M304.2 809.3h0 M305.5 808.3h0 M306.8 807.1h0 M308.0 807.7h0 M309.3 807.1h0 M310.6 807.6h0 M311.8 807.3h0 M313.1 807.3h0 M314.4 807.0h0 M315.6 808.8h0 M316.9 808.8h0 M318.2 809.6h0 M319.5 809.9h0 M320.7 810.8h0 M322.0 811.5h0 M323.3 813.3h0 M324.5 814.2h0 M325.8 814.9h0 M327.1 815.9h0 M328.3 814.6h0 M329.6 812.8h0 M330.9 811.0h0 M332.2 810.2h0 M333.4 810.1h0 M334.7 811.3h0 M336.0 810.8h0 M337.2 811.7h0 M338.5 811.5h0 M339.8 810.3h0 M341.0 808.6h0 M342.3 808.0h0 M343.6 807.6h0 M344.9 807.3h0 M346.1 806.9h0 M347.4 806.5h0 M348.7 806.4h0 M349.9 805.5h0 M351.2 805.3h0 M352.5 806.4h0 M353.7 806.9h0 M355.0 806.5h0 M356.3 807.0h0 M357.6 807.3h0 M358.8 806.8h0 M360.1 807.4h0 M361.4 808.6h0 M362.6 809.0h0 M363.9 810.1h0 M365.2 809.6h0 M366.4 808.7h0 M367.7 807.6h0 M369.0 807.0h0 M370.3 805.8h0 M371.5 804.9h0 M372.8 804.1h0 M374.1 803.6h0 M375.3 803.2h0 M376.6 802.6h0 M377.9 802.3h0 M379.1 802.0h0 M380.4 801.8h0 M381.7 801.7h0 M382.9 801.7h0 M384.2 801.5h0 M385.5 801.6h0 M386.8 801.5h0 M388.0 801.5h0 M389.3 801.5h0 M390.6 801.7h0 M391.8 801.5h0 M393.1 801.9h0 M394.4 801.9h0 M395.6 802.2h0 M396.9 802.2h0 M398.2 802.5h0 M399.5 802.1h0 M400.7 801.9h0 M402.0 801.5h0 M403.3 801.9h0 M404.5 801.8h0 M405.8 801.6h0 M407.1 801.7h0 M408.3 802.0h0 M409.6 801.8h0 M410.9 801.7h0 M412.2 801.5h0 M413.4 801.2h0 M414.7 801.0h0 M416.0 800.8h0 M417.2 800.5h0 M418.5 800.5h0 M419.8 800.5h0 M421.0 800.4h0 M422.3 800.3h0 M423.6 800.3h0 M424.9 800.3h0 M426.1 800.2h0 M427.4 800.0h0 M428.7 800.0h0 M429.9 799.8h0 M431.2 799.6h0 M432.5 799.4h0 M433.7 799.2h0 M435.0 798.9h0 M436.3 798.6h0 M437.6 798.4h0 M438.8 798.4h0 M440.1 798.5h0 M441.4 798.4h0 M442.6 798.5h0 M443.9 798.3h0 M445.2 798.2h0 M446.4 798.1h0 M447.7 797.5h0 M449.0 797.2h0 M450.3 795.7h0 M451.5 795.2h0 M452.8 795.4h0 M454.1 796.0h0 M455.3 796.1h0 M456.6 797.6h0 M457.9 797.9h0 M459.1 797.8h0 M460.4 797.8h0 M461.7 797.6h0 M463.0 792.6h0 M464.2 792.1h0 M465.5 792.2h0 M466.8 792.2h0 M468.0 792.3h0 M469.3 793.1h0 M470.6 793.1h0 M471.8 793.1h0 M473.1 793.0h0 M474.4 793.2h0 M475.7 797.4h0 M476.9 797.6h0 M478.2 791.3h0 M479.5 790.1h0 M480.7 788.8h0 M482.0 782.5h0 M483.3 781.5h0 M484.5 787.6h0 M485.8 785.1h0 M487.1 785.6h0 M488.3 788.2h0 M489.6 789.5h0 M490.9 789.7h0 M492.2 793.4h0 M493.4 794.0h0 M494.7 796.8h0 M496.0 791.1h0 M497.2 790.1h0 M498.5 789.0h0 M499.8 788.2h0 M501.0 788.2h0 M502.3 786.6h0 M503.6 786.3h0 M504.9 781.2h0 M506.1 780.9h0 M507.4 773.8h0 M508.7 775.7h0 M509.9 775.7h0 M511.2 781.8h0 M512.5 783.0h0 M513.7 791.4h0 M515.0 797.0h0 M516.3 798.5h0 M517.6 799.0h0 M518.8 799.3h0 M520.1 799.3h0 M521.4 799.3h0 M522.6 799.3h0 M523.9 788.1h0 M525.2 784.6h0 M526.4 770.9h0 M527.7 764.8h0 M529.0 749.6h0 M530.3 752.1h0 M531.5 753.1h0 M532.8 753.1h0 M534.1 757.2h0 M535.3 769.9h0 M536.6 759.7h0 M537.9 746.0h0 M539.1 739.4h0 M540.4 726.3h0 M541.7 728.3h0 M543.0 680.6h0 M544.2 685.7h0 M545.5 692.3h0 M546.8 707.0h0 M548.0 678.6h0 M549.3 712.6h0 M550.6 661.9h0 M551.8 600.6h0 M553.1 516.4h0 M554.4 544.8h0 M555.7 489.0h0 M556.9 550.4h0 M558.2 536.2h0 M559.5 531.1h0 M560.7 437.3h0 M562.0 440.4h0 M563.3 346.1h0 M564.5 341.0h0 M565.8 335.2h0 M567.1 334.2h0 M568.4 331.2h0 M569.6 330.1h0 M570.9 327.9h0 M572.2 326.6h0 M573.4 325.6h0 M574.7 328.9h0 M576.0 326.3h0 M577.2 323.8h0 M578.5 420.6h0 M579.8 417.1h0 M581.0 402.6h0 M582.3 400.6h0 M583.6 399.1h0 M584.9 399.1h0 M586.1 498.9h0 M587.4 497.9h0 M588.7 496.9h0 M589.9 505.8h0 M591.2 404.7h0 M592.5 304.3h0 M593.7 305.3h0 M595.0 305.8h0 M596.3 299.7h0 M597.6 400.9h0 M598.8 501.2h0 M600.1 500.2h0 M601.4 500.5h0 M602.6 501.5h0 M603.9 400.6h0 M605.2 299.7h0 M606.4 298.4h0 M607.7 297.7h0 M609.0 297.7h0 M610.3 297.2h0 M611.5 301.0h0 M612.8 300.2h0 M614.1 304.0h0 M615.3 299.4h0 M616.6 299.1h0 M617.9 293.8h0 M619.1 295.4h0 M620.4 296.2h0 M621.7 295.9h0 M623.0 297.2h0 M624.2 303.6h0 M625.5 302.9h0 M626.8 303.7h0 M628.0 305.2h0 M629.3 303.5h0 M630.6 308.1h0 M631.8 307.6h0 M633.1 303.6h0 M634.4 305.9h0 M635.7 329.5h0 M636.9 319.5h0 M638.2 321.0h0 M639.5 329.3h0 M640.7 326.7h0 M642.0 303.3h0 M643.3 309.5h0 M644.5 308.3h0 M645.8 299.0h0 M647.1 305.4h0 M648.4 305.2h0 M649.6 298.1h0 M650.9 297.9h0 M652.2 316.7h0 M653.4 384.4h0 M654.7 434.9h0 M656.0 434.5h0 M657.2 436.7h0 M658.5 417.9h0 M659.8 342.1h0 M661.1 292.1h0 M662.3 296.0h0 M663.6 294.3h0 M664.9 298.9h0 M666.1 299.0h0 M667.4 298.6h0 M668.7 297.6h0 M669.9 296.7h0 M671.2 290.9h0 M672.5 336.1h0 M673.8 340.9h0 M675.0 345.7h0 M676.3 355.9h0 M677.6 364.9h0 M678.8 319.2h0 M680.1 315.5h0 M681.4 309.1h0 M682.6 361.3h0 M683.9 387.7h0 M685.2 456.6h0 M686.4 490.7h0 M687.7 490.1h0 M689.0 428.2h0 M690.3 393.5h0 M691.5 328.5h0 M692.8 308.3h0 M694.1 308.6h0 M695.3 310.6h0 M696.6 311.2h0 M697.9 308.0h0 M699.1 293.5h0 M700.4 297.1h0 M701.7 295.9h0 M703.0 304.6h0 M704.2 329.2h0 M705.5 381.7h0 M706.8 402.6h0 M708.0 439.9h0 M709.3 470.3h0 M710.6 496.7h0 M711.8 461.2h0 M713.1 443.9h0 M714.4 447.0h0 M715.7 407.1h0 M716.9 358.0h0 M718.2 340.2h0 M719.5 333.0h0 M720.7 337.6h0 M722.0 342.0h0 M723.3 339.3h0 M724.5 345.4h0 M725.8 345.2h0 M727.1 299.8h0 M728.4 294.7h0 M729.6 363.7h0 M730.9 362.8h0 M732.2 382.2h0 M733.4 437.3h0 M734.7 439.8h0 M736.0 372.9h0 M737.2 371.4h0 M738.5 353.7h0 M739.8 304.7h0 M741.1 305.1h0 M742.3 303.3h0 M743.6 299.9h0 M744.9 297.7h0 M746.1 291.7h0 M747.4 321.8h0 M748.7 326.0h0 M749.9 338.5h0 M751.2 338.5h0 M752.5 343.9h0 M753.8 312.1h0 M755.0 313.7h0 M756.3 301.6h0 M757.6 303.9h0 M758.8 299.7h0 M760.1 306.1h0 M761.4 299.9h0 M762.6 303.9h0 M763.9 303.9h0 M765.2 307.6h0 M766.5 300.3h0 M767.7 303.1h0 M769.0 300.3h0 M770.3 297.8h0 M771.5 296.3h0 M772.8 296.0h0 M774.1 295.3h0 M775.3 306.1h0 M776.6 309.3h0 M777.9 306.3h0 M779.2 307.4h0 M780.4 306.1h0 M781.7 293.6h0 M783.0 317.2h0 M784.2 317.2h0 M785.5 322.3h0 M786.8 323.4h0 M788.0 324.1h0 M789.3 297.2h0 M790.6 297.8h0 M791.8 298.8h0 M793.1 297.7h0 M794.4 304.4h0 M795.7 307.6h0 M796.9 342.3h0 M798.2 342.3h0 M799.5 347.7h0 M800.7 341.4h0 M802.0 339.1h0 M803.3 303.9h0 M804.5 298.7h0 M805.8 293.7h0 M807.1 294.4h0 M808.4 328.0h0 M809.6 364.8h0 M810.9 366.9h0 M812.2 367.9h0 M813.4 420.9h0 M814.7 394.0h0 M816.0 363.1h0 M817.2 359.6h0 M818.5 358.2h0 M819.8 305.3h0 M821.1 297.9h0 M822.3 292.1h0 M823.6 297.2h0 M824.9 296.7h0 M826.1 298.1h0 M827.4 302.1h0 M828.7 308.0h0 M829.9 303.1h0 M831.2 304.4h0 M832.5 302.4h0 M833.8 306.7h0 M835.0 302.3h0 M836.3 307.7h0 M837.6 307.9h0 M838.8 317.2h0 M840.1 308.6h0 M841.4 306.5h0 M842.6 307.0h0 M843.9 307.5h0 M845.2 298.2h0 M846.5 298.7h0 M847.7 305.8h0 M849.0 299.7h0 M850.3 297.6h0 M851.5 299.2h0 M852.8 304.2h0 M854.1 300.8h0 M855.3 301.3h0 M856.6 307.2h0 M857.9 305.4h0 M859.2 304.7h0 M860.4 308.1h0 M861.7 308.5h0 M863.0 303.2h0 M864.2 308.6h0 M865.5 306.2h0 M866.8 298.9h0 M868.0 298.4h0 M869.3 303.7h0 M870.6 298.7h0 M871.9 298.6h0 M873.1 299.7h0 M874.4 304.9h0 M875.7 299.3h0 M876.9 301.8h0 M878.2 307.0h0 M879.5 315.3h0 M880.7 315.3h0 M882.0 321.9h0 M883.3 323.5h0 M884.6 317.7h0 M885.8 310.4h0 M887.1 313.4h0 M888.4 309.5h0 M889.6 304.1h0 M890.9 303.9h0 M892.2 307.5h0 M893.4 299.8h0 M894.7 298.9h0 M896.0 299.1h0 M897.2 305.1h0 M898.5 299.0h0 M899.8 298.8h0 M901.1 298.7h0 M902.3 303.9h0 M903.6 302.1h0 M904.9 302.0h0 M906.1 300.9h0 M907.4 300.5h0 M908.7 325.8h0 M909.9 325.1h0 M911.2 327.0h0 M912.5 330.7h0 M913.8 370.0h0 M915.0 353.8h0 M916.3 353.8h0 M917.6 352.5h0 M918.8 354.3h0 M920.1 314.2h0 M921.4 301.6h0 M922.6 303.1h0 M923.9 304.3h0 M925.2 300.7h0 M926.5 309.1h0 M927.7 308.0h0 M929.0 304.7h0 M930.3 303.8h0 M931.5 307.9h0 M932.8 299.9h0 M934.1 299.6h0 M935.3 296.3h0 M936.6 301.6h0 M937.9 296.0h0 M939.2 295.4h0 M940.4 295.0h0 M941.7 296.7h0 M943.0 295.7h0 M944.2 295.5h0 M945.5 298.1h0 M946.8 297.8h0 M948.0 297.1h0 M949.3 292.3h0 M950.6 293.1h0 M951.9 293.9h0 M953.1 303.2h0 M954.4 303.7h0 M955.7 304.9h0 M956.9 310.5h0 M958.2 310.5h0 M959.5 304.1h0 M960.7 309.8h0 M962.0 309.0h0 M963.3 309.0h0 M964.6 305.2h0 M965.8 308.3h0 M967.1 341.3h0 M968.4 347.6h0 M969.6 347.1h0 M970.9 350.3h0 M972.2 350.3h0 M973.4 310.2h0 M974.7 304.0h0 M976.0 304.0h0 M977.3 300.3h0 M978.5 296.0h0 M979.8 303.1h0 M981.1 303.9h0 M982.3 303.9h0 M983.6 304.3h0 M984.9 325.5h0 M986.1 323.5h0 M987.4 322.0h0 M988.7 317.3h0 M989.9 321.4h0 M991.2 298.5h0 M992.5 296.7h0 M993.8 301.4h0 M995.0 301.6h0 M996.3 302.2h0 M997.6 345.2h0 M998.8 349.1h0 M1000.1 350.3h0 M1001.4 353.3h0 M1002.6 367.5h0 M1003.9 330.5h0 M1005.2 330.5h0 M1006.5 325.9h0 M1007.7 328.4h0 M1009.0 312.2h0 M1010.3 310.9h0 M1011.5 350.4h0 M1012.8 355.0h0 M1014.1 349.3h0 M1015.3 351.7h0 M1016.6 347.6h0 M1017.9 302.4h0 M1019.2 297.2h0 M1020.4 298.8h0 M1021.7 333.0h0 M1023.0 332.2h0 M1024.2 338.5h0 M1025.5 347.7h0 M1026.8 349.8h0 M1028.0 310.8h0 M1029.3 363.9h0 M1030.6 361.4h0 M1031.9 357.3h0 M1033.1 354.5h0 M1034.4 361.4h0 M1035.7 311.2h0 M1036.9 309.3h0 M1038.2 309.3h0 M1039.5 307.7h0 M1040.7 302.0h0 M1042.0 305.7h0 M1043.3 303.0h0 M1044.6 301.7h0 M1045.8 306.7h0 M1047.1 306.0h0 M1048.4 300.1h0 M1049.6 299.7h0 M1050.9 301.0h0 M1052.2 295.7h0 M1053.4 295.7h0 M1054.7 297.7h0 M1056.0 303.2h0 M1057.3 297.9h0 M1058.5 299.9h0 M1059.8 299.4h0 M1061.1 298.5h0 M1062.3 294.3h0 M1063.6 294.9h0 M1064.9 294.4h0 M1066.1 296.1h0 M1067.4 298.8h0 M1068.7 302.3h0 M1070.0 302.7h0 M1071.2 302.6h0 M1072.5 306.4h0 M1073.8 301.7h0 M1075.0 298.0h0 M1076.3 302.4h0 M1077.6 300.6h0 M1078.8 295.2h0 M1080.1 295.2h0 M1081.4 299.1h0 M1082.7 295.1h0 M1083.9 297.2h0 M1085.2 305.1h0 M1086.5 305.7h0 M1087.7 305.3h0 M1089.0 303.4h0" stroke="#0072BD" stroke-width="3.8"/>
<polyline points="74.4,790.8 75.6,790.8 76.9,790.8 78.2,790.8 79.4,790.8 80.7,790.8 82.0,790.8 83.3,790.8 84.5,790.8 85.8,790.8 87.1,790.8 88.3,790.8 89.6,791.8 90.9,792.8 92.1,794.0 93.4,794.3 94.7,793.8 96.0,794.1 97.2,793.9 98.5,794.4 99.8,794.3 101.0,794.2 102.3,794.0 103.6,794.0 104.8,794.0 106.1,794.4 107.4,794.1 108.7,794.0 109.9,793.8 111.2,794.5 112.5,793.9 113.7,794.8 115.0,794.6 116.3,794.0 117.5,794.2 118.8,793.6 120.1,794.8 121.4,794.1 122.6,794.5 123.9,794.2 125.2,793.4 126.4,794.9 127.7,794.6 129.0,794.3 130.2,794.2 131.5,794.1 132.8,794.3 134.1,794.2 135.3,793.9 136.6,794.4 137.9,794.8 139.1,795.2 140.4,795.0 141.7,794.9 142.9,794.5 144.2,794.2 145.5,795.5 146.8,794.4 148.0,795.0 149.3,794.8 150.6,793.5 151.8,794.8 153.1,794.7 154.4,794.1 155.6,794.7 156.9,795.4 158.2,794.0 159.5,794.7 160.7,794.5 162.0,793.7 163.3,794.6 164.5,794.1 165.8,794.5 167.1,794.5 168.3,794.3 169.6,795.6 170.9,793.8 172.2,794.2 173.4,794.3 174.7,793.9 176.0,793.7 177.2,794.1 178.5,795.2 179.8,794.7 181.0,795.1 182.3,795.3 183.6,794.8 184.8,794.4 186.1,794.6 187.4,794.8 188.7,794.6 189.9,795.0 191.2,795.3 192.5,794.6 193.7,795.0 195.0,794.4 196.3,794.9 197.5,794.6 198.8,794.9 200.1,796.1 201.4,795.2 202.6,796.6 203.9,795.3 205.2,794.2 206.4,795.6 207.7,795.7 209.0,796.1 210.2,795.2 211.5,794.7 212.8,794.4 214.1,795.1 215.3,795.1 216.6,796.1 217.9,795.4 219.1,795.0 220.4,795.5 221.7,795.8 222.9,795.2 224.2,794.3 225.5,795.4 226.8,795.1 228.0,795.2 229.3,795.5 230.6,794.9 231.8,795.9 233.1,795.4 234.4,795.4 235.6,794.2 236.9,796.0 238.2,796.1 239.5,796.3 240.7,795.2 242.0,796.4 243.3,796.7 244.5,796.2 245.8,795.3 247.1,795.8 248.3,795.7 249.6,795.7 250.9,793.9 252.2,796.8 253.4,796.7 254.7,796.4 256.0,795.9 257.2,796.5 258.5,797.1 259.8,795.9 261.0,796.7 262.3,796.3 263.6,796.1 264.9,796.3 266.1,796.6 267.4,795.3 268.7,795.6 269.9,796.5 271.2,796.1 272.5,795.5 273.7,795.9 275.0,796.2 276.3,796.4 277.5,796.1 278.8,796.3 280.1,795.0 281.4,797.0 282.6,797.0 283.9,797.0 285.2,796.8 286.4,796.7 287.7,796.9 289.0,796.5 290.2,797.0 291.5,796.9 292.8,795.7 294.1,796.6 295.3,796.2 296.6,796.6 297.9,796.5 299.1,796.0 300.4,796.0 301.7,796.6 302.9,796.2 304.2,796.3 305.5,796.5 306.8,796.5 308.0,796.5 309.3,796.6 310.6,796.3 311.8,796.7 313.1,796.5 314.4,797.0 315.6,797.0 316.9,796.4 318.2,796.2 319.5,798.1 320.7,796.3 322.0,796.5 323.3,797.6 324.5,797.2 325.8,796.5 327.1,796.2 328.3,797.5 329.6,796.8 330.9,796.0 332.2,795.6 333.4,796.2 334.7,796.3 336.0,796.5 337.2,795.6 338.5,796.0 339.8,797.2 341.0,797.3 342.3,797.6 343.6,796.9 344.9,797.0 346.1,797.5 347.4,797.2 348.7,798.9 349.9,797.9 351.2,796.5 352.5,798.6 353.7,797.6 355.0,797.6 356.3,797.5 357.6,797.4 358.8,799.0 360.1,797.6 361.4,797.6 362.6,798.0 363.9,797.4 365.2,797.9 366.4,799.8 367.7,798.2 369.0,799.1 370.3,798.4 371.5,798.8 372.8,797.7 374.1,797.4 375.3,797.7 376.6,798.1 377.9,796.7 379.1,798.0 380.4,798.3 381.7,796.8 382.9,797.8 384.2,797.8 385.5,797.4 386.8,798.6 388.0,798.2 389.3,798.3 390.6,797.6 391.8,797.2 393.1,798.3 394.4,798.1 395.6,799.4 396.9,799.6 398.2,797.1 399.5,798.4 400.7,799.0 402.0,798.6 403.3,798.9 404.5,799.3 405.8,798.7 407.1,798.9 408.3,798.7 409.6,798.4 410.9,798.3 412.2,797.9 413.4,798.2 414.7,797.8 416.0,799.8 417.2,799.3 418.5,799.1 419.8,798.0 421.0,799.2 422.3,797.5 423.6,798.6 424.9,799.4 426.1,799.2 427.4,799.9 428.7,798.3 429.9,799.2 431.2,797.7 432.5,798.0 433.7,799.4 435.0,798.3 436.3,799.4 437.6,799.4 438.8,799.0 440.1,797.8 441.4,797.6 442.6,798.9 443.9,799.5 445.2,797.5 446.4,799.1 447.7,798.7 449.0,799.9 450.3,799.6 451.5,797.9 452.8,800.3 454.1,799.0 455.3,799.2 456.6,801.4 457.9,797.9 459.1,799.3 460.4,798.5 461.7,797.7 463.0,798.6 464.2,799.9 465.5,798.1 466.8,798.0 468.0,798.1 469.3,799.5 470.6,798.8 471.8,799.9 473.1,799.0 474.4,799.6 475.7,800.1 476.9,797.8 478.2,799.3 479.5,797.6 480.7,799.2 482.0,799.5 483.3,799.3 484.5,798.7 485.8,798.7 487.1,798.2 488.3,798.3 489.6,798.1 490.9,798.9 492.2,799.4 493.4,798.6 494.7,799.3 496.0,798.9 497.2,799.8 498.5,799.4 499.8,800.1 501.0,796.9 502.3,797.0 503.6,798.6 504.9,799.6 506.1,800.4 507.4,799.4 508.7,800.1 509.9,799.1 511.2,800.1 512.5,798.7 513.7,800.2 515.0,799.8 516.3,801.0 517.6,797.8 518.8,801.1 520.1,801.0 521.4,800.5 522.6,798.5 523.9,800.3 525.2,800.0 526.4,798.8 527.7,800.1 529.0,799.5 530.3,798.9 531.5,798.7 532.8,798.7 534.1,798.8 535.3,799.1 536.6,796.8 537.9,801.1 539.1,798.0 540.4,799.6 541.7,799.0 543.0,796.1 544.2,797.5 545.5,799.5 546.8,798.8 548.0,799.7 549.3,799.0 550.6,799.6 551.8,798.9 553.1,800.1 554.4,799.8 555.7,799.1 556.9,799.2 558.2,797.9 559.5,799.8 560.7,798.6 562.0,799.7 563.3,798.8 564.5,799.5 565.8,798.8 567.1,795.8 568.4,799.9 569.6,797.8 570.9,799.1 572.2,798.2 573.4,799.1 574.7,797.7 576.0,796.8 577.2,797.5 578.5,798.0 579.8,796.6 581.0,798.6 582.3,799.3 583.6,798.4 584.9,798.0 586.1,797.9 587.4,798.6 588.7,797.1 589.9,798.7 591.2,794.5 592.5,796.9 593.7,799.5 595.0,797.7 596.3,800.5 597.6,796.1 598.8,798.7 600.1,799.4 601.4,797.2 602.6,799.0 603.9,796.0 605.2,797.3 606.4,794.7 607.7,795.1 609.0,797.1 610.3,794.9 611.5,794.3 612.8,792.7 614.1,797.4 615.3,792.6 616.6,792.7 617.9,794.2 619.1,789.4 620.4,794.3 621.7,794.1 623.0,795.9 624.2,792.7 625.5,791.8 626.8,794.0 628.0,795.6 629.3,801.2 630.6,794.0 631.8,789.4 633.1,791.5 634.4,790.9 635.7,791.8 636.9,795.7 638.2,791.8 639.5,790.1 640.7,789.8 642.0,792.5 643.3,786.1 644.5,789.9 645.8,790.8 647.1,792.5 648.4,793.8 649.6,791.6 650.9,789.4 652.2,790.0 653.4,788.6 654.7,785.7 656.0,787.4 657.2,792.2 658.5,785.5 659.8,795.8 661.1,789.2 662.3,789.7 663.6,791.6 664.9,788.6 666.1,787.7 667.4,789.2 668.7,788.0 669.9,788.2 671.2,794.5 672.5,788.4 673.8,787.2 675.0,783.0 676.3,783.9 677.6,786.5 678.8,789.1 680.1,789.1 681.4,787.7 682.6,785.1 683.9,786.4 685.2,787.9 686.4,789.2 687.7,797.1 689.0,784.1 690.3,786.0 691.5,788.9 692.8,786.7 694.1,783.6 695.3,783.6 696.6,784.8 697.9,786.7 699.1,782.6 700.4,785.6 701.7,784.7 703.0,797.4 704.2,781.3 705.5,781.2 706.8,788.3 708.0,781.3 709.3,785.7 710.6,780.8 711.8,785.6 713.1,793.1 714.4,794.2 715.7,782.6 716.9,778.3 718.2,774.5 719.5,785.2 720.7,779.3 722.0,777.5 723.3,780.0 724.5,777.9 725.8,782.1 727.1,780.6 728.4,776.1 729.6,775.8 730.9,778.4 732.2,775.6 733.4,775.6 734.7,776.0 736.0,773.2 737.2,775.6 738.5,779.8 739.8,773.4 741.1,779.3 742.3,775.2 743.6,778.1 744.9,777.0 746.1,773.1 747.4,777.6 748.7,775.5 749.9,775.7 751.2,777.3 752.5,783.8 753.8,778.1 755.0,780.7 756.3,777.1 757.6,773.1 758.8,774.0 760.1,770.6 761.4,771.8 762.6,773.0 763.9,771.3 765.2,768.6 766.5,772.8 767.7,771.3 769.0,770.6 770.3,783.0 771.5,771.3 772.8,772.5 774.1,770.1 775.3,771.3 776.6,772.1 777.9,770.5 779.2,766.8 780.4,767.4 781.7,767.3 783.0,766.5 784.2,768.6 785.5,767.8 786.8,768.8 788.0,767.5 789.3,768.1 790.6,764.2 791.8,767.9 793.1,766.9 794.4,763.3 795.7,764.7 796.9,765.2 798.2,765.0 799.5,767.4 800.7,760.4 802.0,761.8 803.3,764.9 804.5,765.6 805.8,762.4 807.1,764.5 808.4,761.1 809.6,761.4 810.9,763.2 812.2,762.3 813.4,758.3 814.7,763.7 816.0,761.3 817.2,767.8 818.5,761.1 819.8,760.9 821.1,759.7 822.3,770.5 823.6,757.5 824.9,760.5 826.1,762.0 827.4,753.2 828.7,760.6 829.9,757.4 831.2,757.7 832.5,759.0 833.8,761.9 835.0,754.7 836.3,754.6 837.6,755.9 838.8,757.1 840.1,752.8 841.4,759.8 842.6,755.1 843.9,753.9 845.2,756.2 846.5,757.8 847.7,768.6 849.0,758.1 850.3,757.5 851.5,755.4 852.8,758.7 854.1,752.6 855.3,756.3 856.6,752.4 857.9,753.2 859.2,758.1 860.4,755.3 861.7,756.4 863.0,759.9 864.2,750.5 865.5,758.4 866.8,752.4 868.0,753.5 869.3,756.7 870.6,758.0 871.9,750.9 873.1,751.6 874.4,752.8 875.7,752.8 876.9,748.0 878.2,752.9 879.5,750.7 880.7,753.2 882.0,760.2 883.3,754.3 884.6,754.0 885.8,749.9 887.1,750.9 888.4,750.6 889.6,751.0 890.9,747.0 892.2,751.8 893.4,753.5 894.7,752.5 896.0,750.5 897.2,746.3 898.5,752.0 899.8,748.9 901.1,749.1 902.3,747.4 903.6,747.7 904.9,748.6 906.1,751.3 907.4,750.3 908.7,750.1 909.9,746.5 911.2,752.3 912.5,751.9 913.8,751.2 915.0,745.8 916.3,747.8 917.6,746.0 918.8,745.3 920.1,748.5 921.4,759.8 922.6,752.7 923.9,744.0 925.2,748.4 926.5,744.0 927.7,749.7 929.0,743.1 930.3,744.4 931.5,747.4 932.8,745.3 934.1,749.8 935.3,743.8 936.6,748.4 937.9,745.7 939.2,740.1 940.4,746.8 941.7,751.5 943.0,746.7 944.2,743.0 945.5,743.1 946.8,742.3 948.0,746.5 949.3,740.1 950.6,748.3 951.9,745.2 953.1,743.5 954.4,745.8 955.7,744.3 956.9,745.1 958.2,744.6 959.5,747.7 960.7,753.3 962.0,742.4 963.3,743.4 964.6,743.1 965.8,743.3 967.1,746.7 968.4,740.5 969.6,743.8 970.9,741.7 972.2,739.8 973.4,743.8 974.7,752.6 976.0,742.8 977.3,742.7 978.5,756.3 979.8,750.4 981.1,746.5 982.3,750.1 983.6,744.0 984.9,755.9 986.1,741.5 987.4,740.3 988.7,743.0 989.9,746.1 991.2,741.6 992.5,745.1 993.8,742.6 995.0,745.5 996.3,740.3 997.6,742.6 998.8,745.6 1000.1,743.6 1001.4,744.5 1002.6,741.0 1003.9,743.0 1005.2,742.2 1006.5,741.4 1007.7,742.4 1009.0,742.6 1010.3,740.9 1011.5,742.9 1012.8,740.9 1014.1,743.1 1015.3,744.0 1016.6,746.1 1017.9,744.0 1019.2,744.2 1020.4,744.9 1021.7,738.9 1023.0,747.8 1024.2,743.7 1025.5,745.6 1026.8,754.6 1028.0,739.5 1029.3,742.1 1030.6,741.6 1031.9,744.2 1033.1,749.2 1034.4,746.5 1035.7,758.8 1036.9,748.5 1038.2,742.9 1039.5,743.1 1040.7,740.6 1042.0,742.5 1043.3,744.1 1044.6,745.4 1045.8,743.1 1047.1,744.2 1048.4,741.8 1049.6,739.1 1050.9,741.5 1052.2,741.2 1053.4,740.9 1054.7,741.9 1056.0,741.6 1057.3,742.4 1058.5,746.0 1059.8,745.4 1061.1,742.9 1062.3,739.5 1063.6,743.6 1064.9,747.6 1066.1,745.2 1067.4,736.6 1068.7,751.4 1070.0,741.3 1071.2,741.6 1072.5,744.8 1073.8,744.5 1075.0,748.9 1076.3,743.3 1077.6,743.0 1078.8,740.7 1080.1,741.9 1081.4,739.4 1082.7,742.0 1083.9,740.9 1085.2,741.8 1086.5,740.0 1087.7,739.8 1089.0,742.9" stroke="#EDB120" stroke-width="2.6"/>
<path d="M74.4 790.8h0 M75.6 790.8h0 M76.9 790.8h0 M78.2 790.8h0 M79.4 790.8h0 M80.7 790.8h0 M82.0 790.8h0 M83.3 790.8h0 M84.5 790.8h0 M85.8 790.8h0 M87.1 790.8h0 M88.3 790.8h0 M89.6 791.8h0 M90.9 792.8h0 M92.1 794.0h0 M93.4 794.3h0 M94.7 793.8h0 M96.0 794.1h0 M97.2 793.9h0 M98.5 794.4h0 M99.8 794.3h0 M101.0 794.2h0 M102.3 794.0h0 M103.6 794.0h0 M104.8 794.0h0 M106.1 794.4h0 M107.4 794.1h0 M108.7 794.0h0 M109.9 793.8h0 M111.2 794.5h0 M112.5 793.9h0 M113.7 794.8h0 M115.0 794.6h0 M116.3 794.0h0 M117.5 794.2h0 M118.8 793.6h0 M120.1 794.8h0 M121.4 794.1h0 M122.6 794.5h0 M123.9 794.2h0 M125.2 793.4h0 M126.4 794.9h0 M127.7 794.6h0 M129.0 794.3h0 M130.2 794.2h0 M131.5 794.1h0 M132.8 794.3h0 M134.1 794.2h0 M135.3 793.9h0 M136.6 794.4h0 M137.9 794.8h0 M139.1 795.2h0 M140.4 795.0h0 M141.7 794.9h0 M142.9 794.5h0 M144.2 794.2h0 M145.5 795.5h0 M146.8 794.4h0 M148.0 795.0h0 M149.3 794.8h0 M150.6 793.5h0 M151.8 794.8h0 M153.1 794.7h0 M154.4 794.1h0 M155.6 794.7h0 M156.9 795.4h0 M158.2 794.0h0 M159.5 794.7h0 M160.7 794.5h0 M162.0 793.7h0 M163.3 794.6h0 M164.5 794.1h0 M165.8 794.5h0 M167.1 794.5h0 M168.3 794.3h0 M169.6 795.6h0 M170.9 793.8h0 M172.2 794.2h0 M173.4 794.3h0 M174.7 793.9h0 M176.0 793.7h0 M177.2 794.1h0 M178.5 795.2h0 M179.8 794.7h0 M181.0 795.1h0 M182.3 795.3h0 M183.6 794.8h0 M184.8 794.4h0 M186.1 794.6h0 M187.4 794.8h0 M188.7 794.6h0 M189.9 795.0h0 M191.2 795.3h0 M192.5 794.6h0 M193.7 795.0h0 M195.0 794.4h0 M196.3 794.9h0 M197.5 794.6h0 M198.8 794.9h0 M200.1 796.1h0 M201.4 795.2h0 M202.6 796.6h0 M203.9 795.3h0 M205.2 794.2h0 M206.4 795.6h0 M207.7 795.7h0 M209.0 796.1h0 M210.2 795.2h0 M211.5 794.7h0 M212.8 794.4h0 M214.1 795.1h0 M215.3 795.1h0 M216.6 796.1h0 M217.9 795.4h0 M219.1 795.0h0 M220.4 795.5h0 M221.7 795.8h0 M222.9 795.2h0 M224.2 794.3h0 M225.5 795.4h0 M226.8 795.1h0 M228.0 795.2h0 M229.3 795.5h0 M230.6 794.9h0 M231.8 795.9h0 M233.1 795.4h0 M234.4 795.4h0 M235.6 794.2h0 M236.9 796.0h0 M238.2 796.1h0 M239.5 796.3h0 M240.7 795.2h0 M242.0 796.4h0 M243.3 796.7h0 M244.5 796.2h0 M245.8 795.3h0 M247.1 795.8h0 M248.3 795.7h0 M249.6 795.7h0 M250.9 793.9h0 M252.2 796.8h0 M253.4 796.7h0 M254.7 796.4h0 M256.0 795.9h0 M257.2 796.5h0 M258.5 797.1h0 M259.8 795.9h0 M261.0 796.7h0 M262.3 796.3h0 M263.6 796.1h0 M264.9 796.3h0 M266.1 796.6h0 M267.4 795.3h0 M268.7 795.6h0 M269.9 796.5h0 M271.2 796.1h0 M272.5 795.5h0 M273.7 795.9h0 M275.0 796.2h0 M276.3 796.4h0 M277.5 796.1h0 M278.8 796.3h0 M280.1 795.0h0 M281.4 797.0h0 M282.6 797.0h0 M283.9 797.0h0 M285.2 796.8h0 M286.4 796.7h0 M287.7 796.9h0 M289.0 796.5h0 M290.2 797.0h0 M291.5 796.9h0 M292.8 795.7h0 M294.1 796.6h0 M295.3 796.2h0 M296.6 796.6h0 M297.9 796.5h0 M299.1 796.0h0 M300.4 796.0h0 M301.7 796.6h0 M302.9 796.2h0 M304.2 796.3h0 M305.5 796.5h0 M306.8 796.5h0 M308.0 796.5h0 M309.3 796.6h0 M310.6 796.3h0 M311.8 796.7h0 M313.1 796.5h0 M314.4 797.0h0 M315.6 797.0h0 M316.9 796.4h0 M318.2 796.2h0 M319.5 798.1h0 M320.7 796.3h0 M322.0 796.5h0 M323.3 797.6h0 M324.5 797.2h0 M325.8 796.5h0 M327.1 796.2h0 M328.3 797.5h0 M329.6 796.8h0 M330.9 796.0h0 M332.2 795.6h0 M333.4 796.2h0 M334.7 796.3h0 M336.0 796.5h0 M337.2 795.6h0 M338.5 796.0h0 M339.8 797.2h0 M341.0 797.3h0 M342.3 797.6h0 M343.6 796.9h0 M344.9 797.0h0 M346.1 797.5h0 M347.4 797.2h0 M348.7 798.9h0 M349.9 797.9h0 M351.2 796.5h0 M352.5 798.6h0 M353.7 797.6h0 M355.0 797.6h0 M356.3 797.5h0 M357.6 797.4h0 M358.8 799.0h0 M360.1 797.6h0 M361.4 797.6h0 M362.6 798.0h0 M363.9 797.4h0 M365.2 797.9h0 M366.4 799.8h0 M367.7 798.2h0 M369.0 799.1h0 M370.3 798.4h0 M371.5 798.8h0 M372.8 797.7h0 M374.1 797.4h0 M375.3 797.7h0 M376.6 798.1h0 M377.9 796.7h0 M379.1 798.0h0 M380.4 798.3h0 M381.7 796.8h0 M382.9 797.8h0 M384.2 797.8h0 M385.5 797.4h0 M386.8 798.6h0 M388.0 798.2h0 M389.3 798.3h0 M390.6 797.6h0 M391.8 797.2h0 M393.1 798.3h0 M394.4 798.1h0 M395.6 799.4h0 M396.9 799.6h0 M398.2 797.1h0 M399.5 798.4h0 M400.7 799.0h0 M402.0 798.6h0 M403.3 798.9h0 M404.5 799.3h0 M405.8 798.7h0 M407.1 798.9h0 M408.3 798.7h0 M409.6 798.4h0 M410.9 798.3h0 M412.2 797.9h0 M413.4 798.2h0 M414.7 797.8h0 M416.0 799.8h0 M417.2 799.3h0 M418.5 799.1h0 M419.8 798.0h0 M421.0 799.2h0 M422.3 797.5h0 M423.6 798.6h0 M424.9 799.4h0 M426.1 799.2h0 M427.4 799.9h0 M428.7 798.3h0 M429.9 799.2h0 M431.2 797.7h0 M432.5 798.0h0 M433.7 799.4h0 M435.0 798.3h0 M436.3 799.4h0 M437.6 799.4h0 M438.8 799.0h0 M440.1 797.8h0 M441.4 797.6h0 M442.6 798.9h0 M443.9 799.5h0 M445.2 797.5h0 M446.4 799.1h0 M447.7 798.7h0 M449.0 799.9h0 M450.3 799.6h0 M451.5 797.9h0 M452.8 800.3h0 M454.1 799.0h0 M455.3 799.2h0 M456.6 801.4h0 M457.9 797.9h0 M459.1 799.3h0 M460.4 798.5h0 M461.7 797.7h0 M463.0 798.6h0 M464.2 799.9h0 M465.5 798.1h0 M466.8 798.0h0 M468.0 798.1h0 M469.3 799.5h0 M470.6 798.8h0 M471.8 799.9h0 M473.1 799.0h0 M474.4 799.6h0 M475.7 800.1h0 M476.9 797.8h0 M478.2 799.3h0 M479.5 797.6h0 M480.7 799.2h0 M482.0 799.5h0 M483.3 799.3h0 M484.5 798.7h0 M485.8 798.7h0 M487.1 798.2h0 M488.3 798.3h0 M489.6 798.1h0 M490.9 798.9h0 M492.2 799.4h0 M493.4 798.6h0 M494.7 799.3h0 M496.0 798.9h0 M497.2 799.8h0 M498.5 799.4h0 M499.8 800.1h0 M501.0 796.9h0 M502.3 797.0h0 M503.6 798.6h0 M504.9 799.6h0 M506.1 800.4h0 M507.4 799.4h0 M508.7 800.1h0 M509.9 799.1h0 M511.2 800.1h0 M512.5 798.7h0 M513.7 800.2h0 M515.0 799.8h0 M516.3 801.0h0 M517.6 797.8h0 M518.8 801.1h0 M520.1 801.0h0 M521.4 800.5h0 M522.6 798.5h0 M523.9 800.3h0 M525.2 800.0h0 M526.4 798.8h0 M527.7 800.1h0 M529.0 799.5h0 M530.3 798.9h0 M531.5 798.7h0 M532.8 798.7h0 M534.1 798.8h0 M535.3 799.1h0 M536.6 796.8h0 M537.9 801.1h0 M539.1 798.0h0 M540.4 799.6h0 M541.7 799.0h0 M543.0 796.1h0 M544.2 797.5h0 M545.5 799.5h0 M546.8 798.8h0 M548.0 799.7h0 M549.3 799.0h0 M550.6 799.6h0 M551.8 798.9h0 M553.1 800.1h0 M554.4 799.8h0 M555.7 799.1h0 M556.9 799.2h0 M558.2 797.9h0 M559.5 799.8h0 M560.7 798.6h0 M562.0 799.7h0 M563.3 798.8h0 M564.5 799.5h0 M565.8 798.8h0 M567.1 795.8h0 M568.4 799.9h0 M569.6 797.8h0 M570.9 799.1h0 M572.2 798.2h0 M573.4 799.1h0 M574.7 797.7h0 M576.0 796.8h0 M577.2 797.5h0 M578.5 798.0h0 M579.8 796.6h0 M581.0 798.6h0 M582.3 799.3h0 M583.6 798.4h0 M584.9 798.0h0 M586.1 797.9h0 M587.4 798.6h0 M588.7 797.1h0 M589.9 798.7h0 M591.2 794.5h0 M592.5 796.9h0 M593.7 799.5h0 M595.0 797.7h0 M596.3 800.5h0 M597.6 796.1h0 M598.8 798.7h0 M600.1 799.4h0 M601.4 797.2h0 M602.6 799.0h0 M603.9 796.0h0 M605.2 797.3h0 M606.4 794.7h0 M607.7 795.1h0 M609.0 797.1h0 M610.3 794.9h0 M611.5 794.3h0 M612.8 792.7h0 M614.1 797.4h0 M615.3 792.6h0 M616.6 792.7h0 M617.9 794.2h0 M619.1 789.4h0 M620.4 794.3h0 M621.7 794.1h0 M623.0 795.9h0 M624.2 792.7h0 M625.5 791.8h0 M626.8 794.0h0 M628.0 795.6h0 M629.3 801.2h0 M630.6 794.0h0 M631.8 789.4h0 M633.1 791.5h0 M634.4 790.9h0 M635.7 791.8h0 M636.9 795.7h0 M638.2 791.8h0 M639.5 790.1h0 M640.7 789.8h0 M642.0 792.5h0 M643.3 786.1h0 M644.5 789.9h0 M645.8 790.8h0 M647.1 792.5h0 M648.4 793.8h0 M649.6 791.6h0 M650.9 789.4h0 M652.2 790.0h0 M653.4 788.6h0 M654.7 785.7h0 M656.0 787.4h0 M657.2 792.2h0 M658.5 785.5h0 M659.8 795.8h0 M661.1 789.2h0 M662.3 789.7h0 M663.6 791.6h0 M664.9 788.6h0 M666.1 787.7h0 M667.4 789.2h0 M668.7 788.0h0 M669.9 788.2h0 M671.2 794.5h0 M672.5 788.4h0 M673.8 787.2h0 M675.0 783.0h0 M676.3 783.9h0 M677.6 786.5h0 M678.8 789.1h0 M680.1 789.1h0 M681.4 787.7h0 M682.6 785.1h0 M683.9 786.4h0 M685.2 787.9h0 M686.4 789.2h0 M687.7 797.1h0 M689.0 784.1h0 M690.3 786.0h0 M691.5 788.9h0 M692.8 786.7h0 M694.1 783.6h0 M695.3 783.6h0 M696.6 784.8h0 M697.9 786.7h0 M699.1 782.6h0 M700.4 785.6h0 M701.7 784.7h0 M703.0 797.4h0 M704.2 781.3h0 M705.5 781.2h0 M706.8 788.3h0 M708.0 781.3h0 M709.3 785.7h0 M710.6 780.8h0 M711.8 785.6h0 M713.1 793.1h0 M714.4 794.2h0 M715.7 782.6h0 M716.9 778.3h0 M718.2 774.5h0 M719.5 785.2h0 M720.7 779.3h0 M722.0 777.5h0 M723.3 780.0h0 M724.5 777.9h0 M725.8 782.1h0 M727.1 780.6h0 M728.4 776.1h0 M729.6 775.8h0 M730.9 778.4h0 M732.2 775.6h0 M733.4 775.6h0 M734.7 776.0h0 M736.0 773.2h0 M737.2 775.6h0 M738.5 779.8h0 M739.8 773.4h0 M741.1 779.3h0 M742.3 775.2h0 M743.6 778.1h0 M744.9 777.0h0 M746.1 773.1h0 M747.4 777.6h0 M748.7 775.5h0 M749.9 775.7h0 M751.2 777.3h0 M752.5 783.8h0 M753.8 778.1h0 M755.0 780.7h0 M756.3 777.1h0 M757.6 773.1h0 M758.8 774.0h0 M760.1 770.6h0 M761.4 771.8h0 M762.6 773.0h0 M763.9 771.3h0 M765.2 768.6h0 M766.5 772.8h0 M767.7 771.3h0 M769.0 770.6h0 M770.3 783.0h0 M771.5 771.3h0 M772.8 772.5h0 M774.1 770.1h0 M775.3 771.3h0 M776.6 772.1h0 M777.9 770.5h0 M779.2 766.8h0 M780.4 767.4h0 M781.7 767.3h0 M783.0 766.5h0 M784.2 768.6h0 M785.5 767.8h0 M786.8 768.8h0 M788.0 767.5h0 M789.3 768.1h0 M790.6 764.2h0 M791.8 767.9h0 M793.1 766.9h0 M794.4 763.3h0 M795.7 764.7h0 M796.9 765.2h0 M798.2 765.0h0 M799.5 767.4h0 M800.7 760.4h0 M802.0 761.8h0 M803.3 764.9h0 M804.5 765.6h0 M805.8 762.4h0 M807.1 764.5h0 M808.4 761.1h0 M809.6 761.4h0 M810.9 763.2h0 M812.2 762.3h0 M813.4 758.3h0 M814.7 763.7h0 M816.0 761.3h0 M817.2 767.8h0 M818.5 761.1h0 M819.8 760.9h0 M821.1 759.7h0 M822.3 770.5h0 M823.6 757.5h0 M824.9 760.5h0 M826.1 762.0h0 M827.4 753.2h0 M828.7 760.6h0 M829.9 757.4h0 M831.2 757.7h0 M832.5 759.0h0 M833.8 761.9h0 M835.0 754.7h0 M836.3 754.6h0 M837.6 755.9h0 M838.8 757.1h0 M840.1 752.8h0 M841.4 759.8h0 M842.6 755.1h0 M843.9 753.9h0 M845.2 756.2h0 M846.5 757.8h0 M847.7 768.6h0 M849.0 758.1h0 M850.3 757.5h0 M851.5 755.4h0 M852.8 758.7h0 M854.1 752.6h0 M855.3 756.3h0 M856.6 752.4h0 M857.9 753.2h0 M859.2 758.1h0 M860.4 755.3h0 M861.7 756.4h0 M863.0 759.9h0 M864.2 750.5h0 M865.5 758.4h0 M866.8 752.4h0 M868.0 753.5h0 M869.3 756.7h0 M870.6 758.0h0 M871.9 750.9h0 M873.1 751.6h0 M874.4 752.8h0 M875.7 752.8h0 M876.9 748.0h0 M878.2 752.9h0 M879.5 750.7h0 M880.7 753.2h0 M882.0 760.2h0 M883.3 754.3h0 M884.6 754.0h0 M885.8 749.9h0 M887.1 750.9h0 M888.4 750.6h0 M889.6 751.0h0 M890.9 747.0h0 M892.2 751.8h0 M893.4 753.5h0 M894.7 752.5h0 M896.0 750.5h0 M897.2 746.3h0 M898.5 752.0h0 M899.8 748.9h0 M901.1 749.1h0 M902.3 747.4h0 M903.6 747.7h0 M904.9 748.6h0 M906.1 751.3h0 M907.4 750.3h0 M908.7 750.1h0 M909.9 746.5h0 M911.2 752.3h0 M912.5 751.9h0 M913.8 751.2h0 M915.0 745.8h0 M916.3 747.8h0 M917.6 746.0h0 M918.8 745.3h0 M920.1 748.5h0 M921.4 759.8h0 M922.6 752.7h0 M923.9 744.0h0 M925.2 748.4h0 M926.5 744.0h0 M927.7 749.7h0 M929.0 743.1h0 M930.3 744.4h0 M931.5 747.4h0 M932.8 745.3h0 M934.1 749.8h0 M935.3 743.8h0 M936.6 748.4h0 M937.9 745.7h0 M939.2 740.1h0 M940.4 746.8h0 M941.7 751.5h0 M943.0 746.7h0 M944.2 743.0h0 M945.5 743.1h0 M946.8 742.3h0 M948.0 746.5h0 M949.3 740.1h0 M950.6 748.3h0 M951.9 745.2h0 M953.1 743.5h0 M954.4 745.8h0 M955.7 744.3h0 M956.9 745.1h0 M958.2 744.6h0 M959.5 747.7h0 M960.7 753.3h0 M962.0 742.4h0 M963.3 743.4h0 M964.6 743.1h0 M965.8 743.3h0 M967.1 746.7h0 M968.4 740.5h0 M969.6 743.8h0 M970.9 741.7h0 M972.2 739.8h0 M973.4 743.8h0 M974.7 752.6h0 M976.0 742.8h0 M977.3 742.7h0 M978.5 756.3h0 M979.8 750.4h0 M981.1 746.5h0 M982.3 750.1h0 M983.6 744.0h0 M984.9 755.9h0 M986.1 741.5h0 M987.4 740.3h0 M988.7 743.0h0 M989.9 746.1h0 M991.2 741.6h0 M992.5 745.1h0 M993.8 742.6h0 M995.0 745.5h0 M996.3 740.3h0 M997.6 742.6h0 M998.8 745.6h0 M1000.1 743.6h0 M1001.4 744.5h0 M1002.6 741.0h0 M1003.9 743.0h0 M1005.2 742.2h0 M1006.5 741.4h0 M1007.7 742.4h0 M1009.0 742.6h0 M1010.3 740.9h0 M1011.5 742.9h0 M1012.8 740.9h0 M1014.1 743.1h0 M1015.3 744.0h0 M1016.6 746.1h0 M1017.9 744.0h0 M1019.2 744.2h0 M1020.4 744.9h0 M1021.7 738.9h0 M1023.0 747.8h0 M1024.2 743.7h0 M1025.5 745.6h0 M1026.8 754.6h0 M1028.0 739.5h0 M1029.3 742.1h0 M1030.6 741.6h0 M1031.9 744.2h0 M1033.1 749.2h0 M1034.4 746.5h0 M1035.7 758.8h0 M1036.9 748.5h0 M1038.2 742.9h0 M1039.5 743.1h0 M1040.7 740.6h0 M1042.0 742.5h0 M1043.3 744.1h0 M1044.6 745.4h0 M1045.8 743.1h0 M1047.1 744.2h0 M1048.4 741.8h0 M1049.6 739.1h0 M1050.9 741.5h0 M1052.2 741.2h0 M1053.4 740.9h0 M1054.7 741.9h0 M1056.0 741.6h0 M1057.3 742.4h0 M1058.5 746.0h0 M1059.8 745.4h0 M1061.1 742.9h0 M1062.3 739.5h0 M1063.6 743.6h0 M1064.9 747.6h0 M1066.1 745.2h0 M1067.4 736.6h0 M1068.7 751.4h0 M1070.0 741.3h0 M1071.2 741.6h0 M1072.5 744.8h0 M1073.8 744.5h0 M1075.0 748.9h0 M1076.3 743.3h0 M1077.6 743.0h0 M1078.8 740.7h0 M1080.1 741.9h0 M1081.4 739.4h0 M1082.7 742.0h0 M1083.9 740.9h0 M1085.2 741.8h0 M1086.5 740.0h0 M1087.7 739.8h0 M1089.0 742.9h0" stroke="#EDB120" stroke-width="3.6"/>
<path d="M99.3 799.8h11.0M104.8 794.3v11.0M100.9 795.8l7.9 7.9M100.9 803.7l7.9 -7.9M131.1 803.8h11.0M136.6 798.3v11.0M132.6 799.9l7.9 7.9M132.6 807.8l7.9 -7.9M162.8 800.0h11.0M168.3 794.5v11.0M164.4 796.1l7.9 7.9M164.4 804.0l7.9 -7.9M194.6 802.5h11.0M200.1 797.0v11.0M196.1 798.6l7.9 7.9M196.1 806.5l7.9 -7.9M226.3 809.9h11.0M231.8 804.4v11.0M227.9 805.9l7.9 7.9M227.9 813.9l7.9 -7.9M258.1 814.5h11.0M263.6 809.0v11.0M259.6 810.5l7.9 7.9M259.6 818.4l7.9 -7.9M289.8 808.1h11.0M295.3 802.6v11.0M291.4 804.2l7.9 7.9M291.4 812.1l7.9 -7.9M321.6 803.6h11.0M327.1 798.1v11.0M323.1 799.6l7.9 7.9M323.1 807.5l7.9 -7.9M353.3 801.3h11.0M358.8 795.8v11.0M354.9 797.3l7.9 7.9M354.9 805.2l7.9 -7.9M385.1 799.8h11.0M390.6 794.3v11.0M386.6 795.8l7.9 7.9M386.6 803.7l7.9 -7.9M416.8 793.9h11.0M422.3 788.4v11.0M418.4 790.0l7.9 7.9M418.4 797.9l7.9 -7.9M448.6 760.0h11.0M454.1 754.5v11.0M450.1 756.0l7.9 7.9M450.1 763.9l7.9 -7.9M480.3 789.6h11.0M485.8 784.1v11.0M481.8 785.7l7.9 7.9M481.8 793.6l7.9 -7.9M512.1 773.1h11.0M517.6 767.6v11.0M513.6 769.2l7.9 7.9M513.6 777.1l7.9 -7.9M543.8 737.9h11.0M549.3 732.4v11.0M545.3 734.0l7.9 7.9M545.3 741.9l7.9 -7.9M575.5 405.4h11.0M581.0 399.9v11.0M577.1 401.5l7.9 7.9M577.1 409.4l7.9 -7.9M607.3 301.0h11.0M612.8 295.5v11.0M608.8 297.0l7.9 7.9M608.8 305.0l7.9 -7.9M639.0 301.3h11.0M644.5 295.8v11.0M640.6 297.3l7.9 7.9M640.6 305.2l7.9 -7.9M670.8 402.4h11.0M676.3 396.9v11.0M672.3 398.4l7.9 7.9M672.3 406.3l7.9 -7.9M702.5 561.0h11.0M708.0 555.5v11.0M704.1 557.1l7.9 7.9M704.1 565.0l7.9 -7.9M734.3 371.5h11.0M739.8 366.0v11.0M735.8 367.5l7.9 7.9M735.8 375.4l7.9 -7.9M766.0 299.2h11.0M771.5 293.7v11.0M767.6 295.3l7.9 7.9M767.6 303.2l7.9 -7.9M797.8 301.3h11.0M803.3 295.8v11.0M799.3 297.3l7.9 7.9M799.3 305.2l7.9 -7.9M829.5 314.7h11.0M835.0 309.2v11.0M831.1 310.7l7.9 7.9M831.1 318.6l7.9 -7.9M861.3 306.3h11.0M866.8 300.8v11.0M862.8 302.4l7.9 7.9M862.8 310.3l7.9 -7.9M893.0 307.6h11.0M898.5 302.1v11.0M894.6 303.6l7.9 7.9M894.6 311.6l7.9 -7.9M924.8 309.6h11.0M930.3 304.1v11.0M926.3 305.7l7.9 7.9M926.3 313.6l7.9 -7.9M956.5 308.4h11.0M962.0 302.9v11.0M958.1 304.4l7.9 7.9M958.1 312.3l7.9 -7.9M988.3 303.3h11.0M993.8 297.8v11.0M989.8 299.3l7.9 7.9M989.8 307.2l7.9 -7.9M1020.0 321.3h11.0M1025.5 315.8v11.0M1021.5 317.3l7.9 7.9M1021.5 325.2l7.9 -7.9M1051.8 308.4h11.0M1057.3 302.9v11.0M1053.3 304.4l7.9 7.9M1053.3 312.3l7.9 -7.9M1083.5 296.9h11.0M1089.0 291.4v11.0M1085.0 293.0l7.9 7.9M1085.0 300.9l7.9 -7.9" stroke="#A2142F" stroke-width="1.7" stroke-linecap="butt"/>
<path d="M104.8 799.8h0 M136.6 803.8h0 M168.3 800.0h0 M200.1 802.5h0 M231.8 809.9h0 M263.6 814.5h0 M295.3 808.1h0 M327.1 803.6h0 M358.8 801.3h0 M390.6 799.8h0 M422.3 793.9h0 M454.1 760.0h0 M485.8 789.6h0 M517.6 773.1h0 M549.3 737.9h0 M581.0 405.4h0 M612.8 301.0h0 M644.5 301.3h0 M676.3 402.4h0 M708.0 561.0h0 M739.8 371.5h0 M771.5 299.2h0 M803.3 301.3h0 M835.0 314.7h0 M866.8 306.3h0 M898.5 307.6h0 M930.3 309.6h0 M962.0 308.4h0 M993.8 303.3h0 M1025.5 321.3h0 M1057.3 308.4h0 M1089.0 296.9h0" stroke="#A2142F" stroke-width="5"/>
</g>
<g font-size="14.5" fill="#3a3a3a">
<text transform="translate(68 926.5) scale(1 1.06)" text-anchor="end">-50</text>
<text transform="translate(68 798.5) scale(1 1.06)" text-anchor="end">0</text>
<text transform="translate(68 671.8) scale(1 1.06)" text-anchor="end">50</text>
<text transform="translate(68 545.0) scale(1 1.06)" text-anchor="end">100</text>
<text transform="translate(68 418.3) scale(1 1.06)" text-anchor="end">150</text>
<text transform="translate(68 291.6) scale(1 1.06)" text-anchor="end">200</text>
<text transform="translate(68 164.9) scale(1 1.06)" text-anchor="end">250</text>
<text transform="translate(73.6 939.3) scale(1 1.06)" text-anchor="middle">0</text>
<text transform="translate(200.6 939.3) scale(1 1.06)" text-anchor="middle">100</text>
<text transform="translate(327.6 939.3) scale(1 1.06)" text-anchor="middle">200</text>
<text transform="translate(454.6 939.3) scale(1 1.06)" text-anchor="middle">300</text>
<text transform="translate(581.5 939.3) scale(1 1.06)" text-anchor="middle">400</text>
<text transform="translate(708.5 939.3) scale(1 1.06)" text-anchor="middle">500</text>
<text transform="translate(835.5 939.3) scale(1 1.06)" text-anchor="middle">600</text>
<text transform="translate(962.5 939.3) scale(1 1.06)" text-anchor="middle">700</text>
<text transform="translate(1089.5 939.3) scale(1 1.06)" text-anchor="middle">800</text>
</g>
<text transform="translate(582 153.9) scale(1 1.05)" text-anchor="middle" font-size="16.05" font-weight="bold" fill="#262626">Episode reward for rlHybridAgentPFC with rlSACAgent</text>
<text transform="translate(581.5 958.2) scale(1 1.04)" text-anchor="middle" font-size="16" fill="#333">Episode Number</text>
<text transform="translate(35.8 541) rotate(-90) scale(1 1.04)" text-anchor="middle" font-size="16" fill="#333">Episode Reward</text>
</svg>

<!-- right panel: progress -->
<div class="a" style="left:1140px;top:114px;width:206px;height:18px;background:#fff;"></div>
<div class="a" style="left:1140px;top:114px;width:31px;height:18px;background:#268bdf;"></div>
<div class="btn" style="left:1358px;top:108px;width:134px;height:30px;border-color:#cfcfcf;background:#f5f5f5;"></div>
<div class="t" id="tstop" style="left:1371px;top:115px;color:#b4b4b4;">Training stopped</div>

<div class="t" style="left:1140px;top:152.5px;">Episode number:</div>
<div class="t" style="left:1303px;top:152.5px;">800/5000</div>
<div class="t" style="left:1140px;top:182.7px;">Start time:</div>
<div class="t" style="left:1303px;top:182.7px;">11-Jun-2024 17:40:31</div>
<div class="t" style="left:1140px;top:213.3px;">Duration:</div>
<div class="t" style="left:1303px;top:213.3px;">03:52:02</div>
<div class="t" style="left:1140px;top:243.7px;">Final result:</div>
<div class="t" style="left:1303px;top:240.5px;line-height:18px;white-space:normal;width:190px;">Training finished after all agents reached stop training criteria.</div>

<!-- Training Information -->
<div class="panel" style="left:1139.6px;top:309px;width:352.6px;height:359px;"><div class="hd" style="height:25px;"></div></div>
<div class="t b" style="left:1145px;top:314px;">Training Information</div>
<div class="a" style="left:1153px;top:347px;width:326px;height:115px;box-sizing:border-box;border:1px solid #6f6f6f;background:#fff;"></div>
<div class="a" style="left:1154px;top:348px;width:324px;height:31.5px;background:#f6f6f6;border-bottom:1px solid #8a8a8a;"></div>
<div class="a" style="left:1154px;top:380.5px;width:324px;height:27.6px;background:#268bdf;"></div>
<div class="a" style="left:1316px;top:348px;width:1px;height:60px;background:#7d7d7d;"></div>
<div class="t b" id="hAgent" style="left:1158px;top:358px;font-size:14.1px;color:#111;">Agent</div>
<div class="t b" id="hStatus" style="left:1320.5px;top:358px;font-size:14.1px;color:#111;">Status</div>
<div class="t" style="left:1158px;top:385.6px;color:#fff;">rlSACAgent</div>
<div class="t" style="left:1321px;top:385.6px;color:#fff;">Training finished</div>
<div class="t b" style="left:1153px;top:477px;">Episode Information (rlSACAgent):</div>
<div class="t" style="left:1153px;top:507.3px;">Episode reward:</div>
<div class="t" style="left:1305px;top:507.3px;">199.7689</div>
<div class="t" style="left:1153px;top:537.7px;">Average reward:</div>
<div class="t" style="left:1305px;top:537.7px;">193.1371</div>
<div class="t" style="left:1153px;top:568.1px;">Episode Q0:</div>
<div class="t" style="left:1305px;top:568.1px;">20.8844</div>
<div class="t" style="left:1153px;top:598.6px;">Evaluation statistic:</div>
<div class="t" style="left:1305px;top:598.6px;">196.1823</div>
<div class="btn" style="left:1345px;top:626px;width:134px;height:28px;"></div>
<div class="t" id="tmore" style="left:1365px;top:632px;">More Details...</div>

<!-- Plot Options -->
<div class="panel" style="left:1139.6px;top:680px;width:352.6px;height:143.4px;"><div class="hd" style="height:24.3px;"></div></div>
<div class="t b" style="left:1145px;top:684px;">Plot Options</div>
<div class="cb" style="left:1152.4px;top:718.9px;"></div>
<svg class="a" style="left:1152.4px;top:718.9px" width="17" height="17" viewBox="0 0 17 17"><path d="M3.6 8.8 L6.8 12.4 L13.6 4.2" stroke="#1a1a1a" stroke-width="2" fill="none"/></svg>
<div class="t" style="left:1174px;top:719.5px;">Show EpisodeQ0</div>
<div class="cb" style="left:1152.4px;top:755px;"></div>
<div class="t" style="left:1174px;top:756px;">Show last N episodes</div>
<div class="a" style="left:1347px;top:750px;width:132px;height:27px;box-sizing:border-box;border:1px solid #d6d6d6;background:#f6f6f6;"></div>
<div class="t" style="left:1440px;top:756px;color:#b0b0b0;">5000</div>
<div class="cb" style="left:1152.4px;top:791.6px;"></div>
<svg class="a" style="left:1152.4px;top:791.6px" width="17" height="17" viewBox="0 0 17 17"><path d="M3.6 8.8 L6.8 12.4 L13.6 4.2" stroke="#1a1a1a" stroke-width="2" fill="none"/></svg>
<div class="t" style="left:1174px;top:791.3px;">Show evaluation statistic</div>

<!-- Legend -->
<div class="panel" style="left:1139.6px;top:836px;width:352.6px;height:123px;"></div>
<div class="a" style="left:1146px;top:842px;width:339px;height:110px;background:#fff;"></div>
<svg class="a" style="left:1146px;top:842px" width="339" height="110" viewBox="0 0 339 110" font-family="Liberation Sans, sans-serif" font-size="13.15" fill="#262626">
<path d="M75 9.5 H124" stroke="#4DBEEE" stroke-width="1.3"/><circle cx="99.5" cy="9.5" r="1.6" fill="#4DBEEE"/>
<path d="M75 32.5 H124" stroke="#0072BD" stroke-width="1.3"/><circle cx="99.5" cy="32.5" r="1.6" fill="#0072BD"/>
<path d="M75 55.5 H124" stroke="#EDB120" stroke-width="1.3"/><circle cx="99.5" cy="55.5" r="1.6" fill="#EDB120"/>
<path d="M94 90 H105 M99.5 84.5 V95.5 M95.6 86.1 L103.4 93.9 M95.6 93.9 L103.4 86.1" stroke="#A2142F" stroke-width="1.05"/>
<text x="128.5" y="13.7">Episode reward</text>
<text x="128.5" y="36.7">Average reward</text>
<text x="128.5" y="59.7">Episode Q0</text>
<text x="128.5" y="87.8">Evaluation statistic</text>
<text x="128.5" y="102.2">(MeanEpisodeReward)</text>
</svg>

<!-- status bar -->
<div class="a" id="status"></div><div class="a" id="statusl"></div><div class="a" style="left:1126px;top:986px;width:1.8px;height:29px;background:#8a8a8a;"></div>
<svg class="a" style="left:1483px;top:992px" width="16" height="18" viewBox="0 0 16 18"><path d="M2.6 1.4 L11.6 8.4 L2.6 15.4 Z" fill="#8e8e8e"/><rect x="11.4" y="1.4" width="2.4" height="14" fill="#7e7e7e"/></svg>
</body></html>
